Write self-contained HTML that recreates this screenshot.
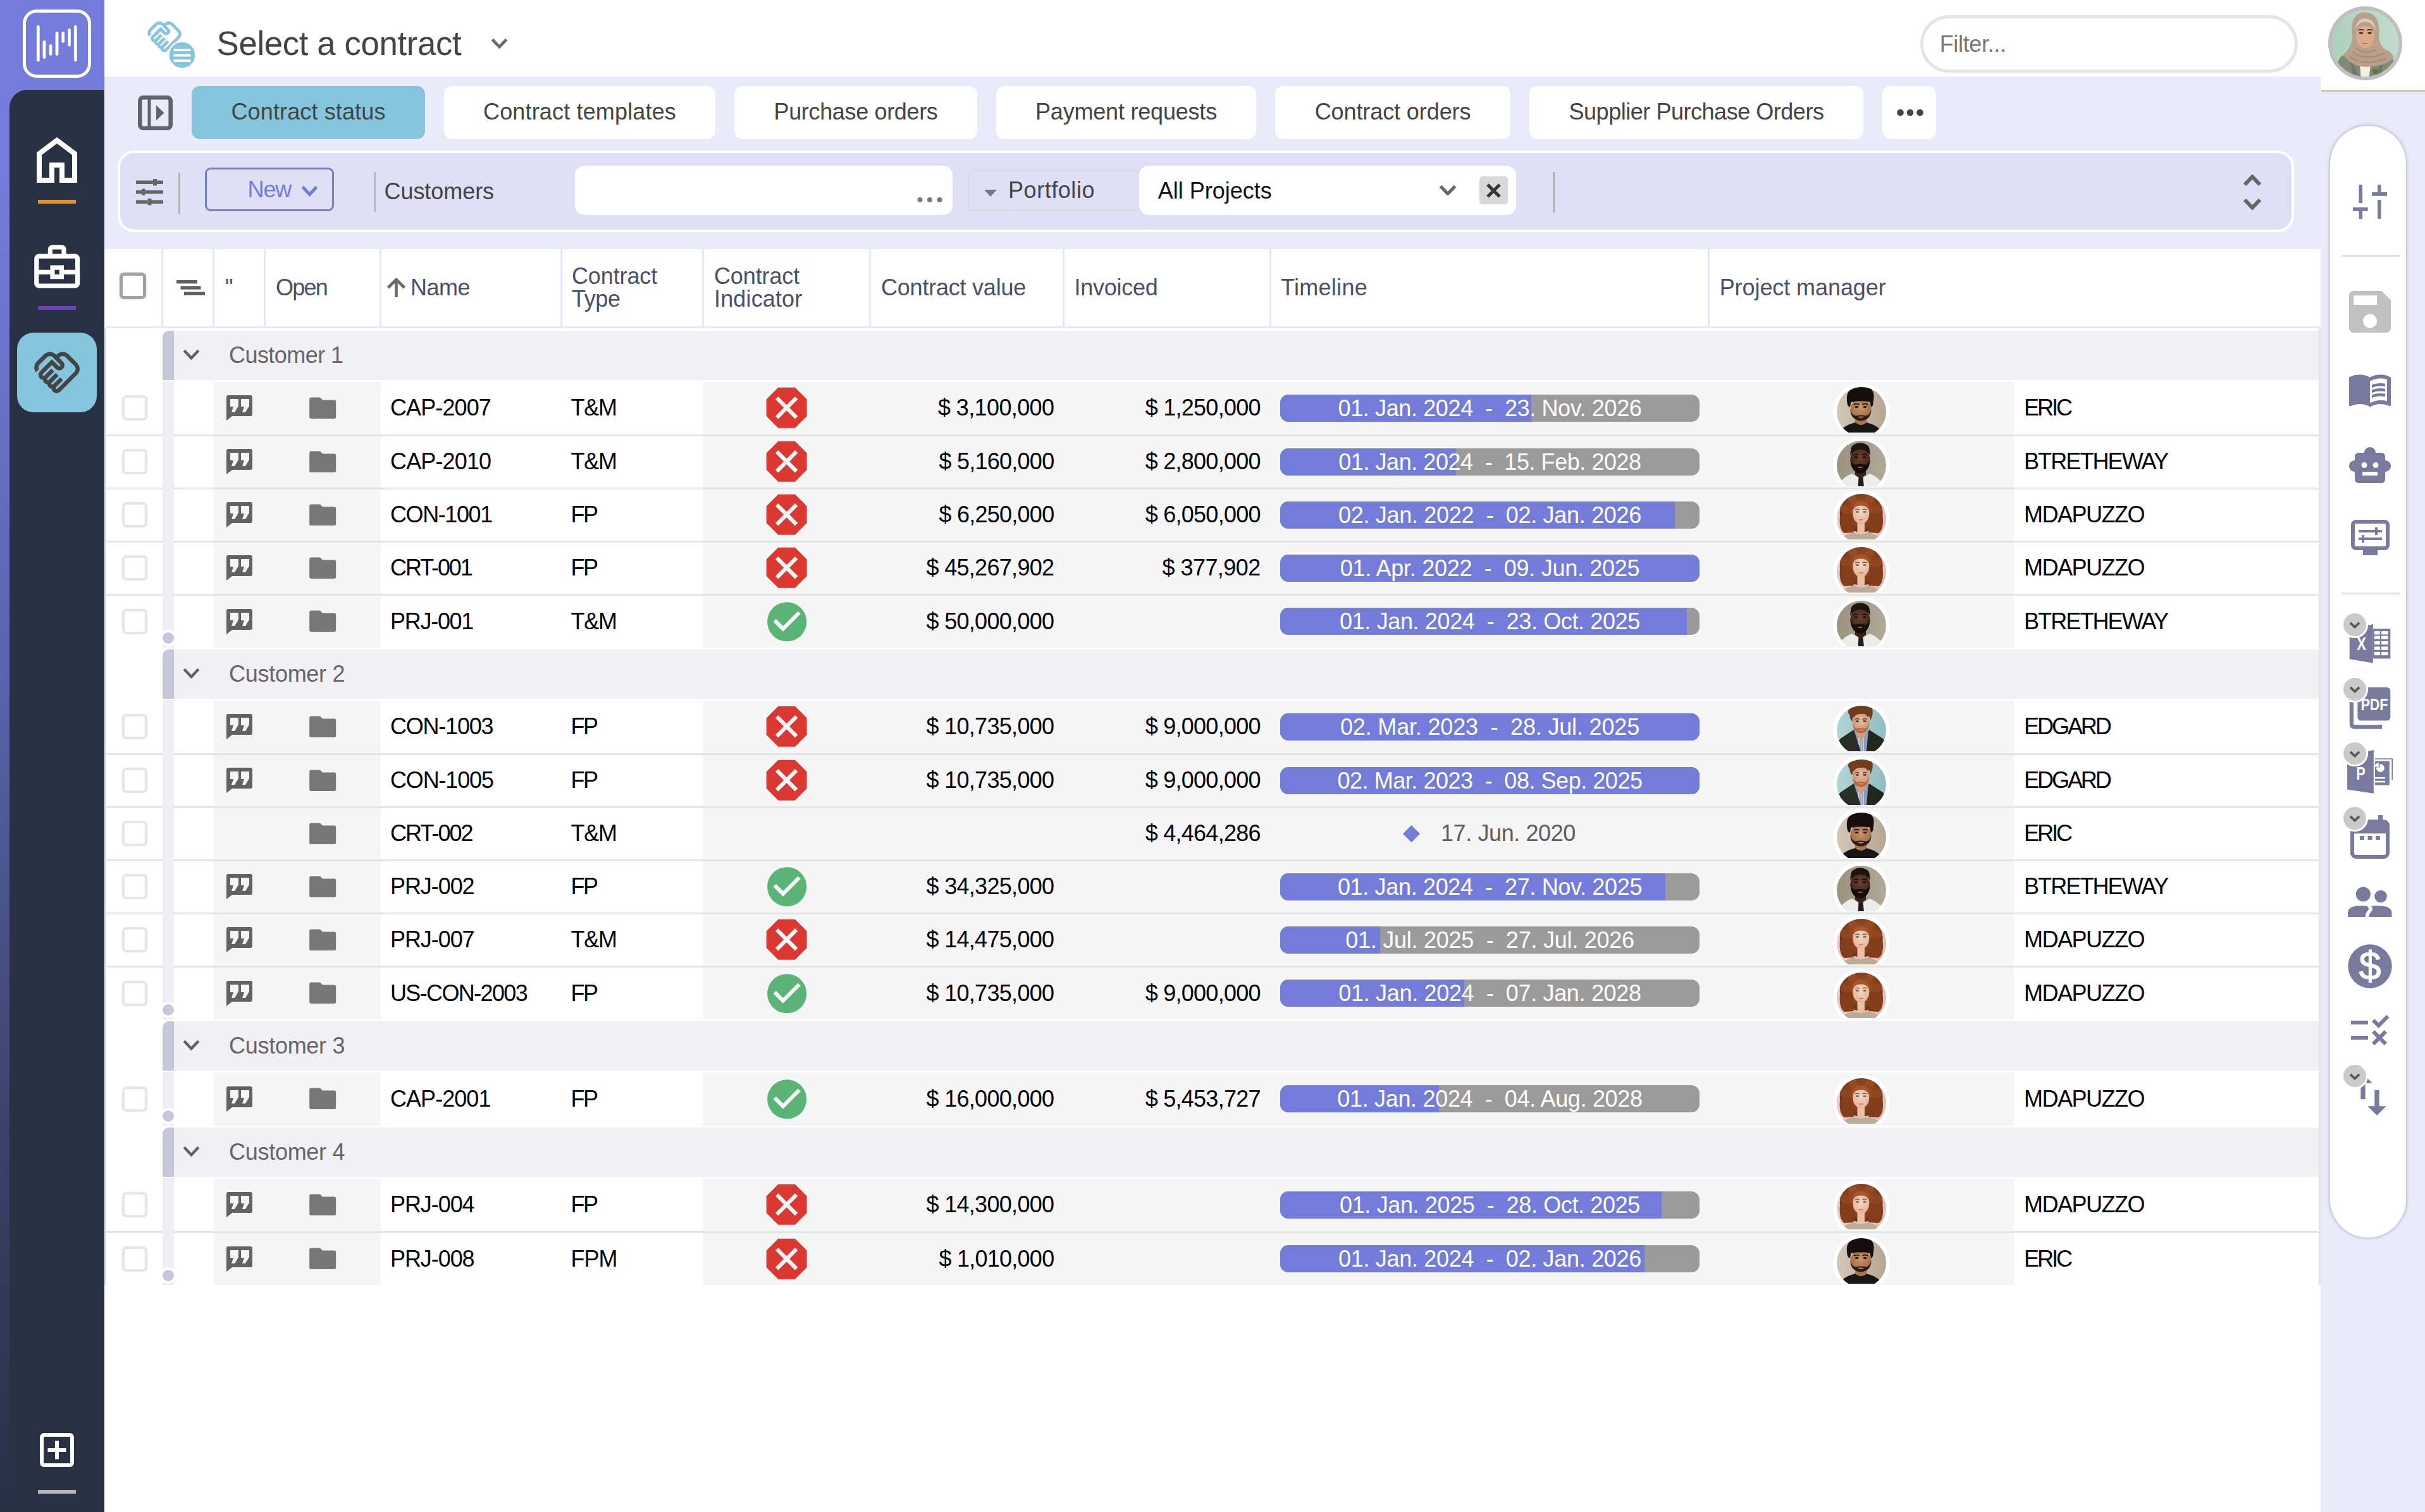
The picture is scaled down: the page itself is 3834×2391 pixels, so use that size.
<!DOCTYPE html><html><head><meta charset="utf-8"><title>Select a contract</title><style>
*{box-sizing:border-box;margin:0;padding:0}
html,body{width:3834px;height:2391px;overflow:hidden;background:#fff}
body{font-family:"Liberation Sans",sans-serif;font-size:36px;color:#444;position:relative}
.a{position:absolute}
.t{position:absolute;white-space:pre;line-height:84px;height:84px}
#side{left:0;top:0;width:165px;height:2391px;background:linear-gradient(180deg,#737dd9 0%,#737dd9 12%,#5a63ad 45%,#3a4268 75%,#283046 100%)}
#dark{left:15px;top:142px;width:150px;height:2249px;background:#283044;border-top-left-radius:28px}
#logo{left:36px;top:15px;width:108px;height:108px;border:5px solid #fff;border-radius:22px}
#tile{left:27px;top:526px;width:126px;height:126px;background:#85c6de;border-radius:26px}
#lav{left:165px;top:121px;width:3504px;height:273px;background:#e9eafa}
#rail{left:3669px;top:145px;width:165px;height:2246px;background:#e9eafa}
#railline{left:3670px;top:142px;width:164px;height:3px;background:#cbc7bc}
#pill{left:3684px;top:199px;width:120px;height:1758px;border-radius:60px;background:#fff;box-shadow:0 0 5px 1px rgba(90,90,100,.38)}
.tab{position:absolute;top:136px;height:84px;border-radius:13px;background:#fff;text-align:center;line-height:82px;color:#444;white-space:pre}
#fbar{left:186px;top:238px;width:3441px;height:129px;border:4px solid #fff;border-radius:26px;background:#dfe0f6}
.vsep{position:absolute;width:3px;background:#b4b4ac}
.hl{position:absolute;background:#e6e7fa}
.ht{position:absolute;white-space:pre;color:#4a4f6a;line-height:36px}
.grp{position:absolute;left:257px;width:3409px;height:77.5px;background:#f0f0f5;border-top-left-radius:10px;overflow:hidden}
.grp i{position:absolute;left:0;top:0;width:18px;height:100%;background:#c6c8da}
.gt{position:absolute;left:362px;white-space:pre;color:#666;line-height:77px;height:77px}
.g1{position:absolute;left:338px;width:264px;height:83px;background:#f5f5f5}
.g2{position:absolute;left:1112px;width:2072px;height:83px;background:#f5f5f5;overflow:hidden}
.sep{position:absolute;height:3px;background:#e5e5e5}
.cb{position:absolute;left:193px;width:40px;height:40px;border:4px solid #e6e6e6;border-radius:7px;background:#fff;box-shadow:0 0 2px rgba(0,0,0,.08)}
.k{color:#000}
.bar{position:absolute;left:2024px;width:663px;height:43px;border-radius:13px;background:#9b9b9b;overflow:hidden}
.bar i{position:absolute;left:0;top:0;height:100%;background:#737dd9}
.bt{position:absolute;left:2024px;width:663px;text-align:center;color:#fff;white-space:pre;line-height:43px;height:43px}
.strip{position:absolute;left:257px;width:18px;background:#eeeef5}
.dot{position:absolute;left:253px;width:26px;height:26px;border-radius:50%;background:#fff}
.dot i{position:absolute;left:4px;top:4px;width:18px;height:18px;border-radius:50%;background:#c6c8da}
.av{position:absolute;left:2898px;width:90px;height:90px}
.badge{position:absolute;width:35.600px;height:35.600px;border-radius:50%;background:#cacaca;box-shadow:0 0 0 3px #fff}
</style></head><body><svg width="0" height="0" style="position:absolute"><defs>
<clipPath id="cp"><circle cx="45" cy="45" r="39"/></clipPath>
<filter id="bl" x="-10%" y="-10%" width="120%" height="120%"><feGaussianBlur stdDeviation="0.75"/></filter>
<linearGradient id="bgE" x1="0" x2="1"><stop offset="0" stop-color="#d6cabb"/><stop offset="1" stop-color="#b3a391"/></linearGradient>
<linearGradient id="bgB" x1="0" x2="1"><stop offset="0" stop-color="#9a917f"/><stop offset="1" stop-color="#b3ab99"/></linearGradient>
<linearGradient id="bgM" x1="0" x2="1"><stop offset="0" stop-color="#e9cbc6"/><stop offset="1" stop-color="#e2bdb8"/></linearGradient>
<linearGradient id="bgG" x1="0" x2="1"><stop offset="0" stop-color="#b4d6d8"/><stop offset="1" stop-color="#8fbcc1"/></linearGradient>
<radialGradient id="skE" cx=".5" cy=".4" r=".6"><stop offset="0" stop-color="#c99468"/><stop offset="1" stop-color="#9a6843"/></radialGradient>
<radialGradient id="skB" cx=".5" cy=".4" r=".6"><stop offset="0" stop-color="#6b4230"/><stop offset="1" stop-color="#3c2318"/></radialGradient>
<radialGradient id="skM" cx=".5" cy=".45" r=".6"><stop offset="0" stop-color="#f6d6be"/><stop offset="1" stop-color="#e3b397"/></radialGradient>
<radialGradient id="skG" cx=".5" cy=".4" r=".6"><stop offset="0" stop-color="#e9bd9d"/><stop offset="1" stop-color="#c48f6e"/></radialGradient>
<radialGradient id="hrM" cx=".5" cy=".45" r=".55"><stop offset="0" stop-color="#a55628"/><stop offset=".7" stop-color="#88401c"/><stop offset="1" stop-color="#6f3016"/></radialGradient>
</defs></svg><div id="side" class="a"></div><div id="dark" class="a"></div><div id="logo" class="a"></div><svg class="a" style="left:36px;top:15px" width="108" height="108" viewBox="36 15 108 108" ><line x1="60.3" y1="42.4" x2="60.3" y2="95.0" stroke="#fff" stroke-width="4.800" stroke-linecap="round"/><line x1="70" y1="66.4" x2="70" y2="90.6" stroke="#fff" stroke-width="4.800" stroke-linecap="round"/><line x1="80" y1="72.4" x2="80" y2="85.6" stroke="#fff" stroke-width="4.800" stroke-linecap="round"/><line x1="90" y1="52.4" x2="90" y2="85.6" stroke="#fff" stroke-width="4.800" stroke-linecap="round"/><line x1="99.7" y1="52.4" x2="99.7" y2="65.6" stroke="#fff" stroke-width="4.800" stroke-linecap="round"/><line x1="109.5" y1="47.4" x2="109.5" y2="71.1" stroke="#fff" stroke-width="4.800" stroke-linecap="round"/><line x1="119.3" y1="42.4" x2="119.3" y2="95.0" stroke="#fff" stroke-width="4.800" stroke-linecap="round"/></svg><svg class="a" style="left:42px;top:205px" width="96" height="96" viewBox="0 0 24 24" ><path fill="#fff" d="M6 19h3v-6h6v6h3v-9l-6-4.5L6 10v9Zm-2 2V9l8-6 8 6v12h-7v-6h-2v6H4Z"/></svg><div class="a" style="left:60px;top:316px;width:60px;height:6px;background:#e8912d"></div><svg class="a" style="left:46.8px;top:379.8px" width="86.4" height="86.4" viewBox="0 0 24 24" ><path fill="#fff" d="M4 21q-.825 0-1.413-.588T2 19V8q0-.825.588-1.413T4 6h4V4q0-.825.588-1.413T10 2h4q.825 0 1.413.588T16 4v2h4q.825 0 1.413.588T22 8v11q0 .825-.588 1.413T20 21H4Zm6-15h4V4h-4v2Zm10 9h-5v2H9v-2H4v4h16v-4Zm-9 0h2v-2h-2v2Zm-7-2h5v-2h6v2h5V8H4v5Z"/></svg><div class="a" style="left:60px;top:484px;width:60px;height:6px;background:#6a3fb8"></div><div id="tile" class="a"></div><svg class="a" style="left:50.9px;top:549.5px" width="78.2" height="78.2" viewBox="0 0 24 24" ><path fill="#444" d="M11.875 20q.1 0 .2-.05t.15-.1l8.2-8.2q.3-.3.438-.675T21 10.225q0-.4-.138-.763T20.425 8.825l-4.25-4.25q-.275-.3-.637-.437T14.775 4q-.375 0-.75.138t-.675.437l-.275.275 1.85 1.875q.375.35.55.8t.175.95q0 1.05-.712 1.763T13.175 10.95q-.5 0-.962-.175t-.813-.525L9.525 8.4 5.15 12.775q-.075.075-.112.163T5 13.125q0 .2.15.363t.35.162q.1 0 .2-.05t.15-.1l3.4-3.4 1.4 1.4-3.375 3.4q-.075.075-.112.163t-.038.187q0 .2.15.35t.35.15q.1 0 .2-.05t.15-.1l3.4-3.375 1.4 1.4-3.375 3.4q-.075.05-.112.15t-.038.2q0 .2.15.35t.35.15q.1 0 .187-.038t.163-.112l3.4-3.375 1.4 1.4-3.4 3.4q-.075.075-.112.163t-.038.187q0 .2.163.35t.362.15Zm-.025 2q-.925 0-1.638-.613T9.376 19.85q-.85-.125-1.425-.7t-.7-1.425q-.85-.125-1.412-.713T5.15 15.6q-.95-.125-1.55-.825T3 13.125q0-.5.188-.963t.537-.812l5.8-5.775L12.8 8.85q.05.075.15.113t.2.037q.225 0 .375-.138t.15-.362q0-.1-.037-.2t-.113-.15L9.950 4.575q-.275-.3-.638-.437T8.550 4q-.375 0-.75.138t-.675.437L3.600 8.125q-.225.225-.375.525t-.2.6q-.05.3 0 .613t.2.587l-1.450 1.450q-.425-.575-.625-1.263T1 9.250q.050-.7.350-1.363T2.175 6.700L5.700 3.175q.600-.575 1.338-.875T8.550 2q.775 0 1.513.3t1.312.875l.275.275.275-.275q.600-.575 1.338-.875T14.775 2q.775 0 1.513.3t1.312.875L21.825 7.400q.575.575.875 1.325T23 10.250q0 .775-.3 1.513t-.875 1.312l-8.200 8.175q-.350.350-.812.550T11.850 22Z"/></svg><svg class="a" style="left:63px;top:2266px" width="54" height="54" viewBox="0 0 54 54" ><rect x="3" y="3" width="48" height="48" rx="4" fill="none" stroke="#fff" stroke-width="6"/><path d="M12.500 27H41.500M27 12.500V41.500" stroke="#fff" stroke-width="6"/></svg><div class="a" style="left:60px;top:2356px;width:60px;height:6px;background:#b5b5b5"></div><svg class="a" style="left:230.6px;top:29.2px" width="58.3" height="58.3" viewBox="0 0 24 24" ><path fill="#85c6de" d="M11.875 20q.1 0 .2-.05t.15-.1l8.2-8.2q.3-.3.438-.675T21 10.225q0-.4-.138-.763T20.425 8.825l-4.25-4.25q-.275-.3-.637-.437T14.775 4q-.375 0-.75.138t-.675.437l-.275.275 1.85 1.875q.375.35.55.8t.175.95q0 1.05-.712 1.763T13.175 10.95q-.5 0-.962-.175t-.813-.525L9.525 8.4 5.15 12.775q-.075.075-.112.163T5 13.125q0 .2.15.363t.35.162q.1 0 .2-.05t.15-.1l3.4-3.4 1.4 1.4-3.375 3.4q-.075.075-.112.163t-.038.187q0 .2.15.35t.35.15q.1 0 .2-.05t.15-.1l3.4-3.375 1.4 1.4-3.375 3.4q-.075.05-.112.15t-.038.2q0 .2.15.35t.35.15q.1 0 .187-.038t.163-.112l3.4-3.375 1.4 1.4-3.4 3.4q-.075.075-.112.163t-.038.187q0 .2.163.35t.362.15Zm-.025 2q-.925 0-1.638-.613T9.376 19.85q-.85-.125-1.425-.7t-.7-1.425q-.85-.125-1.412-.713T5.15 15.6q-.95-.125-1.55-.825T3 13.125q0-.5.188-.963t.537-.812l5.8-5.775L12.8 8.85q.05.075.15.113t.2.037q.225 0 .375-.138t.15-.362q0-.1-.037-.2t-.113-.15L9.950 4.575q-.275-.3-.638-.437T8.550 4q-.375 0-.75.138t-.675.437L3.600 8.125q-.225.225-.375.525t-.2.6q-.05.3 0 .613t.2.587l-1.450 1.450q-.425-.575-.625-1.263T1 9.250q.050-.7.350-1.363T2.175 6.700L5.700 3.175q.600-.575 1.338-.875T8.550 2q.775 0 1.513.3t1.312.875l.275.275.275-.275q.600-.575 1.338-.875T14.775 2q.775 0 1.513.3t1.312.875L21.825 7.400q.575.575.875 1.325T23 10.250q0 .775-.3 1.513t-.875 1.312l-8.200 8.175q-.350.350-.812.550T11.850 22Z"/></svg><svg class="a" style="left:265px;top:64px" width="46" height="46" viewBox="0 0 46 46" ><circle cx="23" cy="23" r="21.500" fill="#85c6de" stroke="#fff" stroke-width="2.500"/><path d="M9.500 15H36.500M9.500 23.500H36.500M9.500 32H36.500" stroke="#fff" stroke-width="4"/></svg><div class="t" style="left:342.600px;top:26.500px;font-size:52.800px;color:#444;letter-spacing:-0.39px;">Select a contract</div><svg class="a" style="left:776px;top:60px" width="27" height="17" viewBox="0 0 27 17" ><path d="M2.3 2.3 L13.5 14.2 L24.7 2.3" fill="none" stroke="#6a6a6a" stroke-width="4.6" stroke-linejoin="miter"/></svg><div class="a" style="left:3036px;top:24px;width:597px;height:91px;border:5px solid #e5e5e5;border-radius:46px"></div><div class="t" style="left:3066.700px;top:28px;color:#777;letter-spacing:-0.34px;">Filter...</div><svg class="a" style="left:3681px;top:10px" width="117" height="117" viewBox="0 0 117 117"><defs><clipPath id="cu"><circle cx="58.500" cy="58.500" r="52.800"/></clipPath><linearGradient id="bgU" x1="0" x2="1"><stop offset="0" stop-color="#acd0bb"/><stop offset="1" stop-color="#c4dccc"/></linearGradient></defs><circle cx="58.500" cy="58.500" r="58.500" fill="#bfbfbf"/><g clip-path="url(#cu)"><rect width="117" height="117" fill="url(#bgU)"/><g filter="url(#bl)"><path d="M12 117Q12 84 22 78L40 74L58 96L88 76L100 80Q108 88 108 117Z" fill="#7f8a79"/><path d="M34 80L52 117H40Z" fill="#6d7868"/><path d="M86 82L72 117H84Z" fill="#6d7868"/><path d="M50 92h17l-3 25h-12Z" fill="#f4efe0"/><path d="M38 50Q33 10 58 9.500Q84 10 80 50Q82 62 90 68Q100 72 104 80Q96 92 70 95Q52 98 38 90Q28 84 24 76Q36 66 38 50Z" fill="#b8a08d"/><path d="M43 36Q46 19 58.500 19.500Q73 20 75 38Q70 26 58.500 26Q48 26 43 36Z" fill="#dccfc2"/><ellipse cx="58.500" cy="46" rx="14.500" ry="20" fill="#dcab8a"/><path d="M44 44Q44 24 58.500 24.500Q73 24 73 44Q70 31 58.500 31Q47 31 44 44Z" fill="#b8a08d"/><path d="M52.500 58.500Q58.500 62 64.500 58.500Q58.500 57 52.500 58.500Z" fill="#c7706a"/><ellipse cx="52" cy="42" rx="3.200" ry="1.600" fill="#3a2820"/><ellipse cx="65.500" cy="42" rx="3.200" ry="1.600" fill="#3a2820"/><path d="M47.500 38q4.500-2.400 9 0M61 38q4.500-2.400 9 0" stroke="#3a2820" stroke-width="1.500" fill="none"/><path d="M38 72Q58 88 88 74M34 80Q58 96 92 82M44 66Q58 78 76 68" stroke="#a48b78" stroke-width="2" fill="none"/><circle cx="74.500" cy="103" r="4.200" fill="#5c7a3e"/></g></g></svg><div id="lav" class="a"></div><div id="rail" class="a"></div><div id="railline" class="a"></div><div id="pill" class="a"></div><svg class="a" style="left:218px;top:150.5px" width="55" height="55" viewBox="0 0 55 55" ><rect x="3.300" y="3.300" width="48.400" height="48.400" rx="5" fill="none" stroke="#60636b" stroke-width="6.600"/><rect x="15.500" y="3" width="5" height="49" fill="#60636b"/><path d="M29 15.500V39.500L41.500 27.500Z" fill="#60636b"/></svg><div class="tab" style="left:303px;width:369px;background:#85c6de;letter-spacing:0.13px;">Contract status</div><div class="tab" style="left:702px;width:429px;letter-spacing:0.16px;">Contract templates</div><div class="tab" style="left:1161px;width:384px;letter-spacing:-0.34px;">Purchase orders</div><div class="tab" style="left:1575px;width:411px;letter-spacing:-0.2px;">Payment requests</div><div class="tab" style="left:2016px;width:372px;letter-spacing:-0.09px;">Contract orders</div><div class="tab" style="left:2418px;width:528px;letter-spacing:-0.47px;">Supplier Purchase Orders</div><div class="tab" style="left:2976px;width:85px"></div><svg class="a" style="left:2990px;top:165px" width="60" height="26" viewBox="0 0 60 26" ><circle cx="14.500" cy="13" r="5.300" fill="#444"/><circle cx="30" cy="13" r="5.300" fill="#444"/><circle cx="45.500" cy="13" r="5.300" fill="#444"/></svg><div id="fbar" class="a"></div><svg class="a" style="left:215px;top:283px" width="43" height="42" viewBox="0 0 43 42" ><g fill="#666"><rect x="0" y="2.500" width="27" height="5.500"/><rect x="33" y="2.500" width="10" height="5.500"/><rect x="27" y="0" width="6" height="10.500"/><rect x="0" y="18" width="9" height="5.500"/><rect x="14.500" y="18" width="28.500" height="5.500"/><rect x="9" y="15.500" width="5.500" height="10.500"/><rect x="0" y="33.500" width="18.500" height="5.500"/><rect x="24" y="33.500" width="19" height="5.500"/><rect x="18.500" y="31" width="6" height="10.500"/></g></svg><div class="vsep" style="left:282px;top:272.500px;height:65.500px"></div><div class="a" style="left:324px;top:265px;width:204px;height:68.500px;border:3.500px solid #737dd9;border-radius:9px"></div><div class="t" style="left:391.600px;top:257.500px;color:#737dd9;letter-spacing:-1.21px;">New</div><svg class="a" style="left:476px;top:293px" width="27" height="17.5" viewBox="0 0 27 17.5" ><path d="M2.5 2.5 L13.5 14.5 L24.5 2.5" fill="none" stroke="#737dd9" stroke-width="5" stroke-linejoin="miter"/></svg><div class="vsep" style="left:591px;top:272px;height:63px;background:#bcbcb6"></div><div class="t" style="left:607.500px;top:261px;letter-spacing:-0.06px;">Customers</div><div class="a" style="left:909px;top:262px;width:597px;height:78px;border-radius:15px;background:#fff"></div><svg class="a" style="left:1448px;top:309px" width="46" height="14" viewBox="0 0 46 14" ><circle cx="6.500" cy="7" r="4" fill="#7a7a7a"/><circle cx="22" cy="7" r="4" fill="#7a7a7a"/><circle cx="37.500" cy="7" r="4" fill="#7a7a7a"/></svg><div class="a" style="left:1530.500px;top:270px;width:272px;height:63px;border:1.500px solid #d8d8d2"></div><svg class="a" style="left:1556px;top:300px" width="20" height="11" viewBox="0 0 20 11" ><path d="M0 0H20L10 11Z" fill="#777"/></svg><div class="t" style="left:1594px;top:258.500px;letter-spacing:0.55px;">Portfolio</div><div class="a" style="left:1800.500px;top:262px;width:596.500px;height:77.600px;border-radius:15px;background:#fff"></div><div class="t k" style="left:1830.700px;top:259.800px;color:#111;letter-spacing:-0.01px;">All Projects</div><svg class="a" style="left:2275px;top:291.5px" width="28" height="17.5" viewBox="0 0 28 17.5" ><path d="M2.5 2.5 L14.0 14.5 L25.5 2.5" fill="none" stroke="#666" stroke-width="5" stroke-linejoin="miter"/></svg><div class="a" style="left:2339px;top:278.500px;width:45px;height:44.500px;border-radius:5px;background:#d8d8d8"></div><svg class="a" style="left:2350px;top:289.5px" width="23" height="23" viewBox="0 0 23 23" ><path d="M2 2L21 21M21 2L2 21" stroke="#333" stroke-width="5"/></svg><div class="vsep" style="left:2455px;top:272px;height:63.600px"></div><svg class="a" style="left:3546px;top:276px" width="30" height="19" viewBox="0 0 30 19" ><path d="M3.0 16.0 L15.0 3.5 L27.0 16.0" fill="none" stroke="#666" stroke-width="6" stroke-linejoin="miter"/></svg><svg class="a" style="left:3546px;top:312.5px" width="30" height="19" viewBox="0 0 30 19" ><path d="M3.0 3.0 L15.0 15.5 L27.0 3.0" fill="none" stroke="#666" stroke-width="6" stroke-linejoin="miter"/></svg><div class="a" style="left:165px;top:394px;width:3504px;height:122px;background:#fff"></div><div class="hl" style="left:255px;top:394px;width:3px;height:122px"></div><div class="hl" style="left:336px;top:394px;width:3px;height:122px"></div><div class="hl" style="left:417px;top:394px;width:3px;height:122px"></div><div class="hl" style="left:600px;top:394px;width:3px;height:122px"></div><div class="hl" style="left:885.5px;top:394px;width:3px;height:122px"></div><div class="hl" style="left:1109.5px;top:394px;width:3px;height:122px"></div><div class="hl" style="left:1373.5px;top:394px;width:3px;height:122px"></div><div class="hl" style="left:1679.5px;top:394px;width:3px;height:122px"></div><div class="hl" style="left:2006.5px;top:394px;width:3px;height:122px"></div><div class="hl" style="left:2699.5px;top:394px;width:3px;height:122px"></div><div class="hl" style="left:168px;top:516px;width:3501px;height:3px"></div><div class="a" style="left:189px;top:431px;width:41.500px;height:41.500px;border:5px solid #a2a2a2;border-radius:7px;box-shadow:0 0 2px rgba(0,0,0,.25)"></div><svg class="a" style="left:279px;top:443px" width="45" height="24" viewBox="0 0 45 24" ><g fill="#606060"><rect x="0" y="0" width="33" height="5.400"/><rect x="6.500" y="9.300" width="32" height="5.400"/><rect x="12" y="18.600" width="33" height="5.400"/></g></svg><div class="ht" style="left:355.7px;top:437px;letter-spacing:-1.47px;">&quot;</div><div class="ht" style="left:436px;top:437px;letter-spacing:-1.77px;">Open</div><svg class="a" style="left:611px;top:440px" width="31" height="31" viewBox="0 0 31 31" ><path d="M15.500 30V3M2.500 15L15.500 2L28.500 15" fill="none" stroke="#6a6a6a" stroke-width="4.600"/></svg><div class="ht" style="left:649px;top:437px;letter-spacing:-0.51px;">Name</div><div class="ht" style="left:904px;top:419px;letter-spacing:-0.13px;">Contract</div><div class="ht" style="left:904px;top:455px;letter-spacing:-0.36px;">Type</div><div class="ht" style="left:1129px;top:419px;letter-spacing:-0.13px;">Contract</div><div class="ht" style="left:1129px;top:455px;letter-spacing:0.15px;">Indicator</div><div class="ht" style="left:1393px;top:437px;letter-spacing:-0.22px;">Contract value</div><div class="ht" style="left:1698.6px;top:437px;letter-spacing:-0.26px;">Invoiced</div><div class="ht" style="left:2025px;top:437px;letter-spacing:0.29px;">Timeline</div><div class="ht" style="left:2718.7px;top:437px;letter-spacing:-0.08px;">Project manager</div><div class="a" style="left:165px;top:519px;width:3px;height:1512.5px;background:#e6e6e6"></div><div class="a" style="left:3666px;top:519px;width:3px;height:1512.5px;background:#e6e6e6"></div><div class="grp" style="top:523.0px"><i></i></div><svg class="a" style="left:289px;top:551.5px" width="27" height="17" viewBox="0 0 27 17" ><path d="M2.2 2.2 L13.5 14.3 L24.8 2.2" fill="none" stroke="#626262" stroke-width="4.4" stroke-linejoin="miter"/></svg><div class="gt" style="top:523.0px;letter-spacing:-0.55px;">Customer 1</div><div class="strip" style="top:603.0px;height:420.5px"></div><div class="dot" style="top:996.0px"><i></i></div><div class="cb" style="top:625.2px"></div><div class="g1" style="top:604.0px"></div><div class="g2" style="top:604.0px"><div class="a" style="left:0;top:2.2px;width:2072px;height:78px;overflow:hidden"><svg class="a" style="left:1786px;top:0" width="90" height="90" viewBox="0 0 90 90"><circle cx="45" cy="45" r="45" fill="#fff"/><g clip-path="url(#cp)"><rect x="0" y="0" width="90" height="90" fill="url(#bgE)"/><g filter="url(#bl)"><path d="M6 90Q10 69 29 64L37 61.500Q44 69 51 61.500L59 64Q78 69 82 90Z" fill="#151515"/><path d="M35 50h18.500v12q-9 8-18.500 0Z" fill="#a9754e"/><path d="M22.500 30Q19 12 34 7.500Q50 2.500 60 9Q67 15 63.500 30Q60 22 44 22Q28 22 22.500 30Z" fill="#15100e"/><ellipse cx="43" cy="20" rx="19" ry="12" fill="#15100e"/><path d="M22.500 24Q21 36 27 38L29 26ZM63.500 24Q65 36 60 38L58 26Z" fill="#15100e"/><ellipse cx="44" cy="42" rx="16.500" ry="16.500" fill="url(#skE)"/><path d="M27.500 42Q28 58 44 59.500Q60 58 60.500 42Q58 51.500 51.500 51.500Q44 49.500 36.500 51.500Q30 51.500 27.500 42Z" fill="#2a1a12"/><path d="M38.500 53Q44 56.500 49.500 53Q44 52 38.500 53Z" fill="#cf8a80"/><path d="M27 31Q33 22 44 24.500Q56 22 61 31Q56 27.500 44 28.500Q32 27.500 27 31Z" fill="#15100e"/><ellipse cx="37.500" cy="37.500" rx="3" ry="1.400" fill="#24150e"/><ellipse cx="50.500" cy="37.500" rx="3" ry="1.400" fill="#24150e"/><path d="M33 33.800q4.500-2.200 8.500 0M46.500 33.800q4-2.200 8.500 0" stroke="#1b120d" stroke-width="1.800" fill="none"/></g></g></svg></div></div><svg class="a" style="left:358px;top:625.2px" width="41" height="40" viewBox="0 0 41 40" ><path fill="#626262" fill-rule="evenodd" d="M3 0H38Q41 0 41 3V30Q41 33 38 33H9L0 40V3Q0 0 3 0ZM6 6V18H11L8 27H13L19 17V6Z M23 6V18H28L25 27H30L36 17V6Z"/></svg><svg class="a" style="left:484.8px;top:619.5px" width="50.4" height="50.4" viewBox="0 0 24 24" ><path fill="#777" d="M10 4H3.300Q2 4 2 5.300V18.700Q2 20 3.300 20H20.700Q22 20 22 18.700V7.300Q22 6 20.700 6H12L10 4Z"/></svg><div class="t k" style="left:617px;top:603.2px;letter-spacing:-0.89px;">CAP-2007</div><div class="t k" style="left:902.600px;top:603.2px;letter-spacing:-1.33px;">T&amp;M</div><svg class="a" style="left:1201.3px;top:602.2px" width="85.34" height="85.34" viewBox="0 0 24 24" ><path fill="#dc3832" d="M15.73 3H8.27L3 8.27v7.46L8.27 21h7.46L21 15.73V8.27L15.73 3zM17 15.74L15.74 17 12 13.26 8.26 17 7 15.74 10.74 12 7 8.26 8.26 7 12 10.74 15.74 7 17 8.26 13.26 12 17 15.74z"/></svg><div class="t k" style="right:2167.6px;top:603.2px;letter-spacing:-0.62px;">$ 3,100,000</div><div class="t k" style="right:1841.3px;top:603.2px;letter-spacing:-0.75px;">$ 1,250,000</div><div class="bar" style="top:624.0px"><i style="width:59.90%"></i></div><div class="bt" style="top:624.0px;letter-spacing:-0.38px;">01. Jan. 2024  -  23. Nov. 2026</div><div class="t k" style="left:3200px;top:603.2px;letter-spacing:-3.0px;">ERIC</div><div class="cb" style="top:710.3px"></div><div class="g1" style="top:688.0px"></div><div class="g2" style="top:688.0px"><div class="a" style="left:0;top:3.3px;width:2072px;height:78px;overflow:hidden"><svg class="a" style="left:1786px;top:0" width="90" height="90" viewBox="0 0 90 90"><circle cx="45" cy="45" r="45" fill="#fff"/><g clip-path="url(#cp)"><rect x="0" y="0" width="90" height="90" fill="url(#bgB)"/><g filter="url(#bl)"><path d="M4 90Q8 66 30 58L44 66L58 58Q80 66 84 90Z" fill="#ecece8"/><path d="M40.500 63.500h7l2.500 26.500h-11Z" fill="#1c1c22"/><path d="M35 46h17v14l-8.500 6l-8.500-6Z" fill="#3a2217"/><ellipse cx="43" cy="20" rx="14.800" ry="10.500" fill="#1a120f"/><ellipse cx="43" cy="36" rx="15.500" ry="19" fill="url(#skB)"/><path d="M27.500 33Q27 55 43 58Q59 55 58.500 33Q57 43.500 51 44Q43 41.500 35 44Q29 43.500 27.500 33Z" fill="#120c09"/><path d="M38 47.500Q43 50.500 48 47.500Q43 46 38 47.500Z" fill="#9a6052"/><path d="M27.500 30Q25.500 14 43 13Q60.500 14 58.500 30Q56 20.500 43 20Q30 20.500 27.500 30Z" fill="#1a120f"/><ellipse cx="36.500" cy="32" rx="2.900" ry="1.300" fill="#0f0806"/><ellipse cx="49.500" cy="32" rx="2.900" ry="1.300" fill="#0f0806"/><path d="M32.500 28.500q4-2 8 0M45.500 28.500q4-2 8 0" stroke="#0f0806" stroke-width="1.700" fill="none"/></g></g></svg></div></div><svg class="a" style="left:358px;top:710.3px" width="41" height="40" viewBox="0 0 41 40" ><path fill="#626262" fill-rule="evenodd" d="M3 0H38Q41 0 41 3V30Q41 33 38 33H9L0 40V3Q0 0 3 0ZM6 6V18H11L8 27H13L19 17V6Z M23 6V18H28L25 27H30L36 17V6Z"/></svg><svg class="a" style="left:484.8px;top:704.6px" width="50.4" height="50.4" viewBox="0 0 24 24" ><path fill="#777" d="M10 4H3.300Q2 4 2 5.300V18.700Q2 20 3.300 20H20.700Q22 20 22 18.700V7.300Q22 6 20.700 6H12L10 4Z"/></svg><div class="t k" style="left:617px;top:688.3px;letter-spacing:-0.85px;">CAP-2010</div><div class="t k" style="left:902.600px;top:688.3px;letter-spacing:-1.33px;">T&amp;M</div><svg class="a" style="left:1201.3px;top:687.3px" width="85.34" height="85.34" viewBox="0 0 24 24" ><path fill="#dc3832" d="M15.73 3H8.27L3 8.27v7.46L8.27 21h7.46L21 15.73V8.27L15.73 3zM17 15.74L15.74 17 12 13.26 8.26 17 7 15.74 10.74 12 7 8.26 8.26 7 12 10.74 15.74 7 17 8.26 13.26 12 17 15.74z"/></svg><div class="t k" style="right:2167.6px;top:688.3px;letter-spacing:-0.75px;">$ 5,160,000</div><div class="t k" style="right:1841.3px;top:688.3px;letter-spacing:-0.75px;">$ 2,800,000</div><div class="bar" style="top:708.9px"><i style="width:41.90%"></i></div><div class="bt" style="top:708.9px;letter-spacing:-0.45px;">01. Jan. 2024  -  15. Feb. 2028</div><div class="t k" style="left:3200px;top:688.3px;letter-spacing:-1.9px;">BTRETHEWAY</div><div class="cb" style="top:794.3px"></div><div class="g1" style="top:772.0px"></div><div class="g2" style="top:772.0px"><div class="a" style="left:0;top:3.3px;width:2072px;height:78px;overflow:hidden"><svg class="a" style="left:1786px;top:0" width="90" height="90" viewBox="0 0 90 90"><circle cx="45" cy="45" r="45" fill="#fff"/><g clip-path="url(#cp)"><rect x="0" y="0" width="90" height="90" fill="url(#bgM)"/><g filter="url(#bl)"><ellipse cx="44.700" cy="36" rx="34" ry="30.500" fill="url(#hrM)"/><path d="M11 40Q9 62 18 68L33 67Q30 50 32 36ZM78.500 40Q81 62 72 68L56 67Q59 50 57 36Z" fill="#823c1a"/><circle cx="18" cy="30" r="7" fill="#8f4520"/><circle cx="71" cy="30" r="7" fill="#8f4520"/><circle cx="31" cy="14" r="7" fill="#964b23"/><circle cx="58" cy="14" r="7" fill="#964b23"/><path d="M6 90Q10 72 32 67.500L44 70L56 67.500Q78 72 84 90Z" fill="#b9ad9a"/><path d="M38.500 50h11.500v17q-5.700 4.500-11.500 0Z" fill="#eac1a6"/><ellipse cx="44.300" cy="36.500" rx="13" ry="17" fill="url(#skM)"/><path d="M31 33Q31 17 44.300 17.500Q58 17 57.500 33Q54 24 44.300 24.500Q34 24 31 33Z" fill="#a5562a"/><path d="M39.500 46.500Q44.300 49.500 49 46.500Q44.300 45 39.500 46.500Z" fill="#d47f78"/><ellipse cx="38.600" cy="34.500" rx="2.700" ry="1.500" fill="#58748c"/><ellipse cx="50" cy="34.500" rx="2.700" ry="1.500" fill="#58748c"/><path d="M35 31q3.600-1.800 7.200 0M46.400 31q3.600-1.800 7.200 0" stroke="#8a4a28" stroke-width="1.300" fill="none"/></g></g></svg></div></div><svg class="a" style="left:358px;top:794.3px" width="41" height="40" viewBox="0 0 41 40" ><path fill="#626262" fill-rule="evenodd" d="M3 0H38Q41 0 41 3V30Q41 33 38 33H9L0 40V3Q0 0 3 0ZM6 6V18H11L8 27H13L19 17V6Z M23 6V18H28L25 27H30L36 17V6Z"/></svg><svg class="a" style="left:484.8px;top:788.6px" width="50.4" height="50.4" viewBox="0 0 24 24" ><path fill="#777" d="M10 4H3.300Q2 4 2 5.300V18.700Q2 20 3.300 20H20.700Q22 20 22 18.700V7.300Q22 6 20.700 6H12L10 4Z"/></svg><div class="t k" style="left:617px;top:772.3px;letter-spacing:-1.41px;">CON-1001</div><div class="t k" style="left:902.600px;top:772.3px;letter-spacing:-2.51px;">FP</div><svg class="a" style="left:1201.3px;top:771.3px" width="85.34" height="85.34" viewBox="0 0 24 24" ><path fill="#dc3832" d="M15.73 3H8.27L3 8.27v7.46L8.27 21h7.46L21 15.73V8.27L15.73 3zM17 15.74L15.74 17 12 13.26 8.26 17 7 15.74 10.74 12 7 8.26 8.26 7 12 10.74 15.74 7 17 8.26 13.26 12 17 15.74z"/></svg><div class="t k" style="right:2167.6px;top:772.3px;letter-spacing:-0.75px;">$ 6,250,000</div><div class="t k" style="right:1841.3px;top:772.3px;letter-spacing:-0.75px;">$ 6,050,000</div><div class="bar" style="top:792.9px"><i style="width:94.06%"></i></div><div class="bt" style="top:792.9px;letter-spacing:-0.3px;">02. Jan. 2022  -  02. Jan. 2026</div><div class="t k" style="left:3200px;top:772.3px;letter-spacing:-1.5px;">MDAPUZZO</div><div class="cb" style="top:878.3px"></div><div class="g1" style="top:856.0px"></div><div class="g2" style="top:856.0px"><div class="a" style="left:0;top:3.3px;width:2072px;height:78px;overflow:hidden"><svg class="a" style="left:1786px;top:0" width="90" height="90" viewBox="0 0 90 90"><circle cx="45" cy="45" r="45" fill="#fff"/><g clip-path="url(#cp)"><rect x="0" y="0" width="90" height="90" fill="url(#bgM)"/><g filter="url(#bl)"><ellipse cx="44.700" cy="36" rx="34" ry="30.500" fill="url(#hrM)"/><path d="M11 40Q9 62 18 68L33 67Q30 50 32 36ZM78.500 40Q81 62 72 68L56 67Q59 50 57 36Z" fill="#823c1a"/><circle cx="18" cy="30" r="7" fill="#8f4520"/><circle cx="71" cy="30" r="7" fill="#8f4520"/><circle cx="31" cy="14" r="7" fill="#964b23"/><circle cx="58" cy="14" r="7" fill="#964b23"/><path d="M6 90Q10 72 32 67.500L44 70L56 67.500Q78 72 84 90Z" fill="#b9ad9a"/><path d="M38.500 50h11.500v17q-5.700 4.500-11.500 0Z" fill="#eac1a6"/><ellipse cx="44.300" cy="36.500" rx="13" ry="17" fill="url(#skM)"/><path d="M31 33Q31 17 44.300 17.500Q58 17 57.500 33Q54 24 44.300 24.500Q34 24 31 33Z" fill="#a5562a"/><path d="M39.500 46.500Q44.300 49.500 49 46.500Q44.300 45 39.500 46.500Z" fill="#d47f78"/><ellipse cx="38.600" cy="34.500" rx="2.700" ry="1.500" fill="#58748c"/><ellipse cx="50" cy="34.500" rx="2.700" ry="1.500" fill="#58748c"/><path d="M35 31q3.600-1.800 7.200 0M46.400 31q3.600-1.800 7.200 0" stroke="#8a4a28" stroke-width="1.300" fill="none"/></g></g></svg></div></div><svg class="a" style="left:358px;top:878.3px" width="41" height="40" viewBox="0 0 41 40" ><path fill="#626262" fill-rule="evenodd" d="M3 0H38Q41 0 41 3V30Q41 33 38 33H9L0 40V3Q0 0 3 0ZM6 6V18H11L8 27H13L19 17V6Z M23 6V18H28L25 27H30L36 17V6Z"/></svg><svg class="a" style="left:484.8px;top:872.6px" width="50.4" height="50.4" viewBox="0 0 24 24" ><path fill="#777" d="M10 4H3.300Q2 4 2 5.300V18.700Q2 20 3.300 20H20.700Q22 20 22 18.700V7.300Q22 6 20.700 6H12L10 4Z"/></svg><div class="t k" style="left:617px;top:856.3px;letter-spacing:-2.1px;">CRT-001</div><div class="t k" style="left:902.600px;top:856.3px;letter-spacing:-2.51px;">FP</div><svg class="a" style="left:1201.3px;top:855.3px" width="85.34" height="85.34" viewBox="0 0 24 24" ><path fill="#dc3832" d="M15.73 3H8.27L3 8.27v7.46L8.27 21h7.46L21 15.73V8.27L15.73 3zM17 15.74L15.74 17 12 13.26 8.26 17 7 15.74 10.74 12 7 8.26 8.26 7 12 10.74 15.74 7 17 8.26 13.26 12 17 15.74z"/></svg><div class="t k" style="right:2167.6px;top:856.3px;letter-spacing:-0.69px;">$ 45,267,902</div><div class="t k" style="right:1841.3px;top:856.3px;letter-spacing:-0.56px;">$ 377,902</div><div class="bar" style="top:876.9px"><i style="width:100.00%"></i></div><div class="bt" style="top:876.9px;letter-spacing:-0.28px;">01. Apr. 2022  -  09. Jun. 2025</div><div class="t k" style="left:3200px;top:856.3px;letter-spacing:-1.5px;">MDAPUZZO</div><div class="cb" style="top:963.0px"></div><div class="g1" style="top:940.0px;height:83.700px"></div><div class="g2" style="top:940.0px;height:83.700px"><div class="a" style="left:0;top:4.0px;width:2072px;height:78px;overflow:hidden"><svg class="a" style="left:1786px;top:0" width="90" height="90" viewBox="0 0 90 90"><circle cx="45" cy="45" r="45" fill="#fff"/><g clip-path="url(#cp)"><rect x="0" y="0" width="90" height="90" fill="url(#bgB)"/><g filter="url(#bl)"><path d="M4 90Q8 66 30 58L44 66L58 58Q80 66 84 90Z" fill="#ecece8"/><path d="M40.500 63.500h7l2.500 26.500h-11Z" fill="#1c1c22"/><path d="M35 46h17v14l-8.500 6l-8.500-6Z" fill="#3a2217"/><ellipse cx="43" cy="20" rx="14.800" ry="10.500" fill="#1a120f"/><ellipse cx="43" cy="36" rx="15.500" ry="19" fill="url(#skB)"/><path d="M27.500 33Q27 55 43 58Q59 55 58.500 33Q57 43.500 51 44Q43 41.500 35 44Q29 43.500 27.500 33Z" fill="#120c09"/><path d="M38 47.500Q43 50.500 48 47.500Q43 46 38 47.500Z" fill="#9a6052"/><path d="M27.500 30Q25.500 14 43 13Q60.500 14 58.500 30Q56 20.500 43 20Q30 20.500 27.500 30Z" fill="#1a120f"/><ellipse cx="36.500" cy="32" rx="2.900" ry="1.300" fill="#0f0806"/><ellipse cx="49.500" cy="32" rx="2.900" ry="1.300" fill="#0f0806"/><path d="M32.500 28.500q4-2 8 0M45.500 28.500q4-2 8 0" stroke="#0f0806" stroke-width="1.700" fill="none"/></g></g></svg></div></div><svg class="a" style="left:358px;top:963.0px" width="41" height="40" viewBox="0 0 41 40" ><path fill="#626262" fill-rule="evenodd" d="M3 0H38Q41 0 41 3V30Q41 33 38 33H9L0 40V3Q0 0 3 0ZM6 6V18H11L8 27H13L19 17V6Z M23 6V18H28L25 27H30L36 17V6Z"/></svg><svg class="a" style="left:484.8px;top:957.3px" width="50.4" height="50.4" viewBox="0 0 24 24" ><path fill="#777" d="M10 4H3.300Q2 4 2 5.300V18.700Q2 20 3.300 20H20.700Q22 20 22 18.700V7.300Q22 6 20.700 6H12L10 4Z"/></svg><div class="t k" style="left:617px;top:941.0px;letter-spacing:-1.28px;">PRJ-001</div><div class="t k" style="left:902.600px;top:941.0px;letter-spacing:-1.33px;">T&amp;M</div><svg class="a" style="left:1206.8px;top:945.5px" width="74.4" height="74.4" viewBox="0 0 24 24" ><path fill="#5ab377" d="M12 2C6.48 2 2 6.48 2 12s4.48 10 10 10 10-4.48 10-10S17.52 2 12 2zm-2 15l-5-5 1.41-1.41L10 14.17l7.59-7.59L19 8l-9 9z"/></svg><div class="t k" style="right:2167.6px;top:941.0px;letter-spacing:-0.69px;">$ 50,000,000</div><div class="bar" style="top:960.9px"><i style="width:97.00%"></i></div><div class="bt" style="top:960.9px;letter-spacing:-0.37px;">01. Jan. 2024  -  23. Oct. 2025</div><div class="t k" style="left:3200px;top:941.0px;letter-spacing:-1.9px;">BTRETHEWAY</div><div class="grp" style="top:1027.0px"><i></i></div><svg class="a" style="left:289px;top:1055.5px" width="27" height="17" viewBox="0 0 27 17" ><path d="M2.2 2.2 L13.5 14.3 L24.8 2.2" fill="none" stroke="#626262" stroke-width="4.4" stroke-linejoin="miter"/></svg><div class="gt" style="top:1027.0px;letter-spacing:-0.28px;">Customer 2</div><div class="strip" style="top:1107.0px;height:504.5px"></div><div class="dot" style="top:1584.0px"><i></i></div><div class="cb" style="top:1129.2px"></div><div class="g1" style="top:1108.0px"></div><div class="g2" style="top:1108.0px"><div class="a" style="left:0;top:2.2px;width:2072px;height:78px;overflow:hidden"><svg class="a" style="left:1786px;top:0" width="90" height="90" viewBox="0 0 90 90"><circle cx="45" cy="45" r="45" fill="#fff"/><g clip-path="url(#cp)"><rect x="0" y="0" width="90" height="90" fill="url(#bgG)"/><g filter="url(#bl)"><path d="M4 90Q4 64 12 58L33 44L44.500 78L57 44L79 58Q86 64 86 90Z" fill="#22261f"/><path d="M34 44L44.500 54L56 44L52 90H38Z" fill="#8d9cbb"/><path d="M41 56v34M44.500 58v32M48 56v34" stroke="#e1e6ef" stroke-width="1.300"/><path d="M12 58L33 44L44.500 80L38 90H20Z" fill="#2a2e27"/><path d="M37 42h15v10l-7.500 9l-7.500-9Z" fill="#cf9c7c"/><ellipse cx="43" cy="15.500" rx="19" ry="10.500" fill="#713c1f"/><ellipse cx="44.300" cy="33" rx="13.300" ry="15.500" fill="url(#skG)"/><path d="M31 33Q31.500 48 44.300 49.500Q57 48 57.500 33Q55.500 41.500 50.500 42Q44.300 40 38 42Q33 41.500 31 33Z" fill="#b56b3f"/><path d="M39.800 44.200Q44.300 46.800 48.800 44.200Q44.300 43 39.800 44.200Z" fill="#dd8f8a"/><path d="M27.500 27Q23 12 38 7Q52 3 62 10Q64.500 18 59.500 29Q58 20.500 53 19Q42 18 34.500 21Q31 23 30.500 31Z" fill="#713c1f"/><ellipse cx="38.500" cy="30.500" rx="2.600" ry="1.200" fill="#3b2a22"/><ellipse cx="50" cy="30.500" rx="2.600" ry="1.200" fill="#3b2a22"/><path d="M35 27.500q3.500-1.800 7 0M46.500 27.500q3.500-1.800 7 0" stroke="#5a3018" stroke-width="1.300" fill="none"/></g></g></svg></div></div><svg class="a" style="left:358px;top:1129.2px" width="41" height="40" viewBox="0 0 41 40" ><path fill="#626262" fill-rule="evenodd" d="M3 0H38Q41 0 41 3V30Q41 33 38 33H9L0 40V3Q0 0 3 0ZM6 6V18H11L8 27H13L19 17V6Z M23 6V18H28L25 27H30L36 17V6Z"/></svg><svg class="a" style="left:484.8px;top:1123.5px" width="50.4" height="50.4" viewBox="0 0 24 24" ><path fill="#777" d="M10 4H3.300Q2 4 2 5.300V18.700Q2 20 3.300 20H20.700Q22 20 22 18.700V7.300Q22 6 20.700 6H12L10 4Z"/></svg><div class="t k" style="left:617px;top:1107.2px;letter-spacing:-1.22px;">CON-1003</div><div class="t k" style="left:902.600px;top:1107.2px;letter-spacing:-2.51px;">FP</div><svg class="a" style="left:1201.3px;top:1106.2px" width="85.34" height="85.34" viewBox="0 0 24 24" ><path fill="#dc3832" d="M15.73 3H8.27L3 8.27v7.46L8.27 21h7.46L21 15.73V8.27L15.73 3zM17 15.74L15.74 17 12 13.26 8.26 17 7 15.74 10.74 12 7 8.26 8.26 7 12 10.74 15.74 7 17 8.26 13.26 12 17 15.74z"/></svg><div class="t k" style="right:2167.6px;top:1107.2px;letter-spacing:-0.69px;">$ 10,735,000</div><div class="t k" style="right:1841.3px;top:1107.2px;letter-spacing:-0.75px;">$ 9,000,000</div><div class="bar" style="top:1128.0px"><i style="width:100.00%"></i></div><div class="bt" style="top:1128.0px;letter-spacing:-0.17px;">02. Mar. 2023  -  28. Jul. 2025</div><div class="t k" style="left:3200px;top:1107.2px;letter-spacing:-3.04px;">EDGARD</div><div class="cb" style="top:1214.3px"></div><div class="g1" style="top:1192.0px"></div><div class="g2" style="top:1192.0px"><div class="a" style="left:0;top:3.3px;width:2072px;height:78px;overflow:hidden"><svg class="a" style="left:1786px;top:0" width="90" height="90" viewBox="0 0 90 90"><circle cx="45" cy="45" r="45" fill="#fff"/><g clip-path="url(#cp)"><rect x="0" y="0" width="90" height="90" fill="url(#bgG)"/><g filter="url(#bl)"><path d="M4 90Q4 64 12 58L33 44L44.500 78L57 44L79 58Q86 64 86 90Z" fill="#22261f"/><path d="M34 44L44.500 54L56 44L52 90H38Z" fill="#8d9cbb"/><path d="M41 56v34M44.500 58v32M48 56v34" stroke="#e1e6ef" stroke-width="1.300"/><path d="M12 58L33 44L44.500 80L38 90H20Z" fill="#2a2e27"/><path d="M37 42h15v10l-7.500 9l-7.500-9Z" fill="#cf9c7c"/><ellipse cx="43" cy="15.500" rx="19" ry="10.500" fill="#713c1f"/><ellipse cx="44.300" cy="33" rx="13.300" ry="15.500" fill="url(#skG)"/><path d="M31 33Q31.500 48 44.300 49.500Q57 48 57.500 33Q55.500 41.500 50.500 42Q44.300 40 38 42Q33 41.500 31 33Z" fill="#b56b3f"/><path d="M39.800 44.200Q44.300 46.800 48.800 44.200Q44.300 43 39.800 44.200Z" fill="#dd8f8a"/><path d="M27.500 27Q23 12 38 7Q52 3 62 10Q64.500 18 59.500 29Q58 20.500 53 19Q42 18 34.500 21Q31 23 30.500 31Z" fill="#713c1f"/><ellipse cx="38.500" cy="30.500" rx="2.600" ry="1.200" fill="#3b2a22"/><ellipse cx="50" cy="30.500" rx="2.600" ry="1.200" fill="#3b2a22"/><path d="M35 27.500q3.500-1.800 7 0M46.500 27.500q3.500-1.800 7 0" stroke="#5a3018" stroke-width="1.300" fill="none"/></g></g></svg></div></div><svg class="a" style="left:358px;top:1214.3px" width="41" height="40" viewBox="0 0 41 40" ><path fill="#626262" fill-rule="evenodd" d="M3 0H38Q41 0 41 3V30Q41 33 38 33H9L0 40V3Q0 0 3 0ZM6 6V18H11L8 27H13L19 17V6Z M23 6V18H28L25 27H30L36 17V6Z"/></svg><svg class="a" style="left:484.8px;top:1208.6px" width="50.4" height="50.4" viewBox="0 0 24 24" ><path fill="#777" d="M10 4H3.300Q2 4 2 5.300V18.700Q2 20 3.300 20H20.700Q22 20 22 18.700V7.300Q22 6 20.700 6H12L10 4Z"/></svg><div class="t k" style="left:617px;top:1192.3px;letter-spacing:-1.16px;">CON-1005</div><div class="t k" style="left:902.600px;top:1192.3px;letter-spacing:-2.51px;">FP</div><svg class="a" style="left:1201.3px;top:1191.3px" width="85.34" height="85.34" viewBox="0 0 24 24" ><path fill="#dc3832" d="M15.73 3H8.27L3 8.27v7.46L8.27 21h7.46L21 15.73V8.27L15.73 3zM17 15.74L15.74 17 12 13.26 8.26 17 7 15.74 10.74 12 7 8.26 8.26 7 12 10.74 15.74 7 17 8.26 13.26 12 17 15.74z"/></svg><div class="t k" style="right:2167.6px;top:1192.3px;letter-spacing:-0.69px;">$ 10,735,000</div><div class="t k" style="right:1841.3px;top:1192.3px;letter-spacing:-0.75px;">$ 9,000,000</div><div class="bar" style="top:1212.8px"><i style="width:100.00%"></i></div><div class="bt" style="top:1212.8px;letter-spacing:-0.46px;">02. Mar. 2023  -  08. Sep. 2025</div><div class="t k" style="left:3200px;top:1192.3px;letter-spacing:-3.04px;">EDGARD</div><div class="cb" style="top:1298.3px"></div><div class="g1" style="top:1276.0px"></div><div class="g2" style="top:1276.0px"><div class="a" style="left:0;top:3.3px;width:2072px;height:78px;overflow:hidden"><svg class="a" style="left:1786px;top:0" width="90" height="90" viewBox="0 0 90 90"><circle cx="45" cy="45" r="45" fill="#fff"/><g clip-path="url(#cp)"><rect x="0" y="0" width="90" height="90" fill="url(#bgE)"/><g filter="url(#bl)"><path d="M6 90Q10 69 29 64L37 61.500Q44 69 51 61.500L59 64Q78 69 82 90Z" fill="#151515"/><path d="M35 50h18.500v12q-9 8-18.500 0Z" fill="#a9754e"/><path d="M22.500 30Q19 12 34 7.500Q50 2.500 60 9Q67 15 63.500 30Q60 22 44 22Q28 22 22.500 30Z" fill="#15100e"/><ellipse cx="43" cy="20" rx="19" ry="12" fill="#15100e"/><path d="M22.500 24Q21 36 27 38L29 26ZM63.500 24Q65 36 60 38L58 26Z" fill="#15100e"/><ellipse cx="44" cy="42" rx="16.500" ry="16.500" fill="url(#skE)"/><path d="M27.500 42Q28 58 44 59.500Q60 58 60.500 42Q58 51.500 51.500 51.500Q44 49.500 36.500 51.500Q30 51.500 27.500 42Z" fill="#2a1a12"/><path d="M38.500 53Q44 56.500 49.500 53Q44 52 38.500 53Z" fill="#cf8a80"/><path d="M27 31Q33 22 44 24.500Q56 22 61 31Q56 27.500 44 28.500Q32 27.500 27 31Z" fill="#15100e"/><ellipse cx="37.500" cy="37.500" rx="3" ry="1.400" fill="#24150e"/><ellipse cx="50.500" cy="37.500" rx="3" ry="1.400" fill="#24150e"/><path d="M33 33.800q4.500-2.200 8.500 0M46.500 33.800q4-2.200 8.500 0" stroke="#1b120d" stroke-width="1.800" fill="none"/></g></g></svg></div></div><svg class="a" style="left:484.8px;top:1292.6px" width="50.4" height="50.4" viewBox="0 0 24 24" ><path fill="#777" d="M10 4H3.300Q2 4 2 5.300V18.700Q2 20 3.300 20H20.700Q22 20 22 18.700V7.300Q22 6 20.700 6H12L10 4Z"/></svg><div class="t k" style="left:617px;top:1276.3px;letter-spacing:-1.97px;">CRT-002</div><div class="t k" style="left:902.600px;top:1276.3px;letter-spacing:-1.33px;">T&amp;M</div><div class="t k" style="right:1841.3px;top:1276.3px;letter-spacing:-0.75px;">$ 4,464,286</div><svg class="a" style="left:2218px;top:1304.8px" width="27" height="27" viewBox="0 0 27 27" ><path d="M13.500 0L27 13.500L13.500 27L0 13.500Z" fill="#737dd9"/></svg><div class="t" style="left:2278px;top:1276.3px;color:#5e5e5e;letter-spacing:-0.4px;">17. Jun. 2020</div><div class="t k" style="left:3200px;top:1276.3px;letter-spacing:-3.0px;">ERIC</div><div class="cb" style="top:1382.3px"></div><div class="g1" style="top:1360.0px"></div><div class="g2" style="top:1360.0px"><div class="a" style="left:0;top:3.3px;width:2072px;height:78px;overflow:hidden"><svg class="a" style="left:1786px;top:0" width="90" height="90" viewBox="0 0 90 90"><circle cx="45" cy="45" r="45" fill="#fff"/><g clip-path="url(#cp)"><rect x="0" y="0" width="90" height="90" fill="url(#bgB)"/><g filter="url(#bl)"><path d="M4 90Q8 66 30 58L44 66L58 58Q80 66 84 90Z" fill="#ecece8"/><path d="M40.500 63.500h7l2.500 26.500h-11Z" fill="#1c1c22"/><path d="M35 46h17v14l-8.500 6l-8.500-6Z" fill="#3a2217"/><ellipse cx="43" cy="20" rx="14.800" ry="10.500" fill="#1a120f"/><ellipse cx="43" cy="36" rx="15.500" ry="19" fill="url(#skB)"/><path d="M27.500 33Q27 55 43 58Q59 55 58.500 33Q57 43.500 51 44Q43 41.500 35 44Q29 43.500 27.500 33Z" fill="#120c09"/><path d="M38 47.500Q43 50.500 48 47.500Q43 46 38 47.500Z" fill="#9a6052"/><path d="M27.500 30Q25.500 14 43 13Q60.500 14 58.500 30Q56 20.500 43 20Q30 20.500 27.500 30Z" fill="#1a120f"/><ellipse cx="36.500" cy="32" rx="2.900" ry="1.300" fill="#0f0806"/><ellipse cx="49.500" cy="32" rx="2.900" ry="1.300" fill="#0f0806"/><path d="M32.500 28.500q4-2 8 0M45.500 28.500q4-2 8 0" stroke="#0f0806" stroke-width="1.700" fill="none"/></g></g></svg></div></div><svg class="a" style="left:358px;top:1382.3px" width="41" height="40" viewBox="0 0 41 40" ><path fill="#626262" fill-rule="evenodd" d="M3 0H38Q41 0 41 3V30Q41 33 38 33H9L0 40V3Q0 0 3 0ZM6 6V18H11L8 27H13L19 17V6Z M23 6V18H28L25 27H30L36 17V6Z"/></svg><svg class="a" style="left:484.8px;top:1376.6px" width="50.4" height="50.4" viewBox="0 0 24 24" ><path fill="#777" d="M10 4H3.300Q2 4 2 5.300V18.700Q2 20 3.300 20H20.700Q22 20 22 18.700V7.300Q22 6 20.700 6H12L10 4Z"/></svg><div class="t k" style="left:617px;top:1360.3px;letter-spacing:-1.07px;">PRJ-002</div><div class="t k" style="left:902.600px;top:1360.3px;letter-spacing:-2.51px;">FP</div><svg class="a" style="left:1206.8px;top:1364.8px" width="74.4" height="74.4" viewBox="0 0 24 24" ><path fill="#5ab377" d="M12 2C6.48 2 2 6.48 2 12s4.48 10 10 10 10-4.48 10-10S17.52 2 12 2zm-2 15l-5-5 1.41-1.41L10 14.17l7.59-7.59L19 8l-9 9z"/></svg><div class="t k" style="right:2167.6px;top:1360.3px;letter-spacing:-0.69px;">$ 34,325,000</div><div class="bar" style="top:1380.8px"><i style="width:91.86%"></i></div><div class="bt" style="top:1380.8px;letter-spacing:-0.34px;">01. Jan. 2024  -  27. Nov. 2025</div><div class="t k" style="left:3200px;top:1360.3px;letter-spacing:-1.9px;">BTRETHEWAY</div><div class="cb" style="top:1466.3px"></div><div class="g1" style="top:1444.0px"></div><div class="g2" style="top:1444.0px"><div class="a" style="left:0;top:3.3px;width:2072px;height:78px;overflow:hidden"><svg class="a" style="left:1786px;top:0" width="90" height="90" viewBox="0 0 90 90"><circle cx="45" cy="45" r="45" fill="#fff"/><g clip-path="url(#cp)"><rect x="0" y="0" width="90" height="90" fill="url(#bgM)"/><g filter="url(#bl)"><ellipse cx="44.700" cy="36" rx="34" ry="30.500" fill="url(#hrM)"/><path d="M11 40Q9 62 18 68L33 67Q30 50 32 36ZM78.500 40Q81 62 72 68L56 67Q59 50 57 36Z" fill="#823c1a"/><circle cx="18" cy="30" r="7" fill="#8f4520"/><circle cx="71" cy="30" r="7" fill="#8f4520"/><circle cx="31" cy="14" r="7" fill="#964b23"/><circle cx="58" cy="14" r="7" fill="#964b23"/><path d="M6 90Q10 72 32 67.500L44 70L56 67.500Q78 72 84 90Z" fill="#b9ad9a"/><path d="M38.500 50h11.500v17q-5.700 4.500-11.500 0Z" fill="#eac1a6"/><ellipse cx="44.300" cy="36.500" rx="13" ry="17" fill="url(#skM)"/><path d="M31 33Q31 17 44.300 17.500Q58 17 57.500 33Q54 24 44.300 24.500Q34 24 31 33Z" fill="#a5562a"/><path d="M39.500 46.500Q44.300 49.500 49 46.500Q44.300 45 39.500 46.500Z" fill="#d47f78"/><ellipse cx="38.600" cy="34.500" rx="2.700" ry="1.500" fill="#58748c"/><ellipse cx="50" cy="34.500" rx="2.700" ry="1.500" fill="#58748c"/><path d="M35 31q3.600-1.800 7.200 0M46.400 31q3.600-1.800 7.200 0" stroke="#8a4a28" stroke-width="1.300" fill="none"/></g></g></svg></div></div><svg class="a" style="left:358px;top:1466.3px" width="41" height="40" viewBox="0 0 41 40" ><path fill="#626262" fill-rule="evenodd" d="M3 0H38Q41 0 41 3V30Q41 33 38 33H9L0 40V3Q0 0 3 0ZM6 6V18H11L8 27H13L19 17V6Z M23 6V18H28L25 27H30L36 17V6Z"/></svg><svg class="a" style="left:484.8px;top:1460.6px" width="50.4" height="50.4" viewBox="0 0 24 24" ><path fill="#777" d="M10 4H3.300Q2 4 2 5.300V18.700Q2 20 3.300 20H20.700Q22 20 22 18.700V7.300Q22 6 20.700 6H12L10 4Z"/></svg><div class="t k" style="left:617px;top:1444.3px;letter-spacing:-1.07px;">PRJ-007</div><div class="t k" style="left:902.600px;top:1444.3px;letter-spacing:-1.33px;">T&amp;M</div><svg class="a" style="left:1201.3px;top:1443.3px" width="85.34" height="85.34" viewBox="0 0 24 24" ><path fill="#dc3832" d="M15.73 3H8.27L3 8.27v7.46L8.27 21h7.46L21 15.73V8.27L15.73 3zM17 15.74L15.74 17 12 13.26 8.26 17 7 15.74 10.74 12 7 8.26 8.26 7 12 10.74 15.74 7 17 8.26 13.26 12 17 15.74z"/></svg><div class="t k" style="right:2167.6px;top:1444.3px;letter-spacing:-0.69px;">$ 14,475,000</div><div class="bar" style="top:1464.8px"><i style="width:23.90%"></i></div><div class="bt" style="top:1464.8px;letter-spacing:-0.25px;">01. Jul. 2025  -  27. Jul. 2026</div><div class="t k" style="left:3200px;top:1444.3px;letter-spacing:-1.5px;">MDAPUZZO</div><div class="cb" style="top:1551.0px"></div><div class="g1" style="top:1528.0px;height:83.700px"></div><div class="g2" style="top:1528.0px;height:83.700px"><div class="a" style="left:0;top:4.0px;width:2072px;height:78px;overflow:hidden"><svg class="a" style="left:1786px;top:0" width="90" height="90" viewBox="0 0 90 90"><circle cx="45" cy="45" r="45" fill="#fff"/><g clip-path="url(#cp)"><rect x="0" y="0" width="90" height="90" fill="url(#bgM)"/><g filter="url(#bl)"><ellipse cx="44.700" cy="36" rx="34" ry="30.500" fill="url(#hrM)"/><path d="M11 40Q9 62 18 68L33 67Q30 50 32 36ZM78.500 40Q81 62 72 68L56 67Q59 50 57 36Z" fill="#823c1a"/><circle cx="18" cy="30" r="7" fill="#8f4520"/><circle cx="71" cy="30" r="7" fill="#8f4520"/><circle cx="31" cy="14" r="7" fill="#964b23"/><circle cx="58" cy="14" r="7" fill="#964b23"/><path d="M6 90Q10 72 32 67.500L44 70L56 67.500Q78 72 84 90Z" fill="#b9ad9a"/><path d="M38.500 50h11.500v17q-5.700 4.500-11.500 0Z" fill="#eac1a6"/><ellipse cx="44.300" cy="36.500" rx="13" ry="17" fill="url(#skM)"/><path d="M31 33Q31 17 44.300 17.500Q58 17 57.500 33Q54 24 44.300 24.500Q34 24 31 33Z" fill="#a5562a"/><path d="M39.500 46.500Q44.300 49.500 49 46.500Q44.300 45 39.500 46.500Z" fill="#d47f78"/><ellipse cx="38.600" cy="34.500" rx="2.700" ry="1.500" fill="#58748c"/><ellipse cx="50" cy="34.500" rx="2.700" ry="1.500" fill="#58748c"/><path d="M35 31q3.600-1.800 7.200 0M46.400 31q3.600-1.800 7.200 0" stroke="#8a4a28" stroke-width="1.300" fill="none"/></g></g></svg></div></div><svg class="a" style="left:358px;top:1551.0px" width="41" height="40" viewBox="0 0 41 40" ><path fill="#626262" fill-rule="evenodd" d="M3 0H38Q41 0 41 3V30Q41 33 38 33H9L0 40V3Q0 0 3 0ZM6 6V18H11L8 27H13L19 17V6Z M23 6V18H28L25 27H30L36 17V6Z"/></svg><svg class="a" style="left:484.8px;top:1545.3px" width="50.4" height="50.4" viewBox="0 0 24 24" ><path fill="#777" d="M10 4H3.300Q2 4 2 5.300V18.700Q2 20 3.300 20H20.700Q22 20 22 18.700V7.300Q22 6 20.700 6H12L10 4Z"/></svg><div class="t k" style="left:617px;top:1529.0px;letter-spacing:-1.63px;">US-CON-2003</div><div class="t k" style="left:902.600px;top:1529.0px;letter-spacing:-2.51px;">FP</div><svg class="a" style="left:1206.8px;top:1533.5px" width="74.4" height="74.4" viewBox="0 0 24 24" ><path fill="#5ab377" d="M12 2C6.48 2 2 6.48 2 12s4.48 10 10 10 10-4.48 10-10S17.52 2 12 2zm-2 15l-5-5 1.41-1.41L10 14.17l7.59-7.59L19 8l-9 9z"/></svg><div class="t k" style="right:2167.6px;top:1529.0px;letter-spacing:-0.69px;">$ 10,735,000</div><div class="t k" style="right:1841.3px;top:1529.0px;letter-spacing:-0.75px;">$ 9,000,000</div><div class="bar" style="top:1548.8px"><i style="width:43.86%"></i></div><div class="bt" style="top:1548.8px;letter-spacing:-0.32px;">01. Jan. 2024  -  07. Jan. 2028</div><div class="t k" style="left:3200px;top:1529.0px;letter-spacing:-1.5px;">MDAPUZZO</div><div class="grp" style="top:1615.0px"><i></i></div><svg class="a" style="left:289px;top:1643.5px" width="27" height="17" viewBox="0 0 27 17" ><path d="M2.2 2.2 L13.5 14.3 L24.8 2.2" fill="none" stroke="#626262" stroke-width="4.4" stroke-linejoin="miter"/></svg><div class="gt" style="top:1615.0px;letter-spacing:-0.28px;">Customer 3</div><div class="strip" style="top:1695.0px;height:84.5px"></div><div class="dot" style="top:1752.0px"><i></i></div><div class="cb" style="top:1718.1px"></div><div class="g1" style="top:1696.0px;height:83.700px"></div><div class="g2" style="top:1696.0px;height:83.700px"><div class="a" style="left:0;top:3.1px;width:2072px;height:78px;overflow:hidden"><svg class="a" style="left:1786px;top:0" width="90" height="90" viewBox="0 0 90 90"><circle cx="45" cy="45" r="45" fill="#fff"/><g clip-path="url(#cp)"><rect x="0" y="0" width="90" height="90" fill="url(#bgM)"/><g filter="url(#bl)"><ellipse cx="44.700" cy="36" rx="34" ry="30.500" fill="url(#hrM)"/><path d="M11 40Q9 62 18 68L33 67Q30 50 32 36ZM78.500 40Q81 62 72 68L56 67Q59 50 57 36Z" fill="#823c1a"/><circle cx="18" cy="30" r="7" fill="#8f4520"/><circle cx="71" cy="30" r="7" fill="#8f4520"/><circle cx="31" cy="14" r="7" fill="#964b23"/><circle cx="58" cy="14" r="7" fill="#964b23"/><path d="M6 90Q10 72 32 67.500L44 70L56 67.500Q78 72 84 90Z" fill="#b9ad9a"/><path d="M38.500 50h11.500v17q-5.700 4.500-11.500 0Z" fill="#eac1a6"/><ellipse cx="44.300" cy="36.500" rx="13" ry="17" fill="url(#skM)"/><path d="M31 33Q31 17 44.300 17.500Q58 17 57.500 33Q54 24 44.300 24.500Q34 24 31 33Z" fill="#a5562a"/><path d="M39.500 46.500Q44.300 49.500 49 46.500Q44.300 45 39.500 46.500Z" fill="#d47f78"/><ellipse cx="38.600" cy="34.500" rx="2.700" ry="1.500" fill="#58748c"/><ellipse cx="50" cy="34.500" rx="2.700" ry="1.500" fill="#58748c"/><path d="M35 31q3.600-1.800 7.200 0M46.400 31q3.600-1.800 7.200 0" stroke="#8a4a28" stroke-width="1.300" fill="none"/></g></g></svg></div></div><svg class="a" style="left:358px;top:1718.1px" width="41" height="40" viewBox="0 0 41 40" ><path fill="#626262" fill-rule="evenodd" d="M3 0H38Q41 0 41 3V30Q41 33 38 33H9L0 40V3Q0 0 3 0ZM6 6V18H11L8 27H13L19 17V6Z M23 6V18H28L25 27H30L36 17V6Z"/></svg><svg class="a" style="left:484.8px;top:1712.4px" width="50.4" height="50.4" viewBox="0 0 24 24" ><path fill="#777" d="M10 4H3.300Q2 4 2 5.300V18.700Q2 20 3.300 20H20.700Q22 20 22 18.700V7.300Q22 6 20.700 6H12L10 4Z"/></svg><div class="t k" style="left:617px;top:1696.1px;letter-spacing:-0.95px;">CAP-2001</div><div class="t k" style="left:902.600px;top:1696.1px;letter-spacing:-2.51px;">FP</div><svg class="a" style="left:1206.8px;top:1700.6px" width="74.4" height="74.4" viewBox="0 0 24 24" ><path fill="#5ab377" d="M12 2C6.48 2 2 6.48 2 12s4.48 10 10 10 10-4.48 10-10S17.52 2 12 2zm-2 15l-5-5 1.41-1.41L10 14.17l7.59-7.59L19 8l-9 9z"/></svg><div class="t k" style="right:2167.6px;top:1696.1px;letter-spacing:-0.69px;">$ 16,000,000</div><div class="t k" style="right:1841.3px;top:1696.1px;letter-spacing:-0.75px;">$ 5,453,727</div><div class="bar" style="top:1716.0px"><i style="width:37.86%"></i></div><div class="bt" style="top:1716.0px;letter-spacing:-0.32px;">01. Jan. 2024  -  04. Aug. 2028</div><div class="t k" style="left:3200px;top:1696.1px;letter-spacing:-1.5px;">MDAPUZZO</div><div class="grp" style="top:1783.0px"><i></i></div><svg class="a" style="left:289px;top:1811.5px" width="27" height="17" viewBox="0 0 27 17" ><path d="M2.2 2.2 L13.5 14.3 L24.8 2.2" fill="none" stroke="#626262" stroke-width="4.4" stroke-linejoin="miter"/></svg><div class="gt" style="top:1783.0px;letter-spacing:-0.28px;">Customer 4</div><div class="strip" style="top:1863.0px;height:168.5px"></div><div class="dot" style="top:2004.0px"><i></i></div><div class="cb" style="top:1885.2px"></div><div class="g1" style="top:1864.0px"></div><div class="g2" style="top:1864.0px"><div class="a" style="left:0;top:2.2px;width:2072px;height:78px;overflow:hidden"><svg class="a" style="left:1786px;top:0" width="90" height="90" viewBox="0 0 90 90"><circle cx="45" cy="45" r="45" fill="#fff"/><g clip-path="url(#cp)"><rect x="0" y="0" width="90" height="90" fill="url(#bgM)"/><g filter="url(#bl)"><ellipse cx="44.700" cy="36" rx="34" ry="30.500" fill="url(#hrM)"/><path d="M11 40Q9 62 18 68L33 67Q30 50 32 36ZM78.500 40Q81 62 72 68L56 67Q59 50 57 36Z" fill="#823c1a"/><circle cx="18" cy="30" r="7" fill="#8f4520"/><circle cx="71" cy="30" r="7" fill="#8f4520"/><circle cx="31" cy="14" r="7" fill="#964b23"/><circle cx="58" cy="14" r="7" fill="#964b23"/><path d="M6 90Q10 72 32 67.500L44 70L56 67.500Q78 72 84 90Z" fill="#b9ad9a"/><path d="M38.500 50h11.500v17q-5.700 4.500-11.500 0Z" fill="#eac1a6"/><ellipse cx="44.300" cy="36.500" rx="13" ry="17" fill="url(#skM)"/><path d="M31 33Q31 17 44.300 17.500Q58 17 57.500 33Q54 24 44.300 24.500Q34 24 31 33Z" fill="#a5562a"/><path d="M39.500 46.500Q44.300 49.500 49 46.500Q44.300 45 39.500 46.500Z" fill="#d47f78"/><ellipse cx="38.600" cy="34.500" rx="2.700" ry="1.500" fill="#58748c"/><ellipse cx="50" cy="34.500" rx="2.700" ry="1.500" fill="#58748c"/><path d="M35 31q3.600-1.800 7.200 0M46.400 31q3.600-1.800 7.200 0" stroke="#8a4a28" stroke-width="1.300" fill="none"/></g></g></svg></div></div><svg class="a" style="left:358px;top:1885.2px" width="41" height="40" viewBox="0 0 41 40" ><path fill="#626262" fill-rule="evenodd" d="M3 0H38Q41 0 41 3V30Q41 33 38 33H9L0 40V3Q0 0 3 0ZM6 6V18H11L8 27H13L19 17V6Z M23 6V18H28L25 27H30L36 17V6Z"/></svg><svg class="a" style="left:484.8px;top:1879.5px" width="50.4" height="50.4" viewBox="0 0 24 24" ><path fill="#777" d="M10 4H3.300Q2 4 2 5.300V18.700Q2 20 3.300 20H20.700Q22 20 22 18.700V7.300Q22 6 20.700 6H12L10 4Z"/></svg><div class="t k" style="left:617px;top:1863.2px;letter-spacing:-1.07px;">PRJ-004</div><div class="t k" style="left:902.600px;top:1863.2px;letter-spacing:-2.51px;">FP</div><svg class="a" style="left:1201.3px;top:1862.2px" width="85.34" height="85.34" viewBox="0 0 24 24" ><path fill="#dc3832" d="M15.73 3H8.27L3 8.27v7.46L8.27 21h7.46L21 15.73V8.27L15.73 3zM17 15.74L15.74 17 12 13.26 8.26 17 7 15.74 10.74 12 7 8.26 8.26 7 12 10.74 15.74 7 17 8.26 13.26 12 17 15.74z"/></svg><div class="t k" style="right:2167.6px;top:1863.2px;letter-spacing:-0.69px;">$ 14,300,000</div><div class="bar" style="top:1884.0px"><i style="width:90.95%"></i></div><div class="bt" style="top:1884.0px;letter-spacing:-0.37px;">01. Jan. 2025  -  28. Oct. 2025</div><div class="t k" style="left:3200px;top:1863.2px;letter-spacing:-1.5px;">MDAPUZZO</div><div class="cb" style="top:1971.0px"></div><div class="g1" style="top:1948.0px;height:83.700px"></div><div class="g2" style="top:1948.0px;height:83.700px"><div class="a" style="left:0;top:4.0px;width:2072px;height:78px;overflow:hidden"><svg class="a" style="left:1786px;top:0" width="90" height="90" viewBox="0 0 90 90"><circle cx="45" cy="45" r="45" fill="#fff"/><g clip-path="url(#cp)"><rect x="0" y="0" width="90" height="90" fill="url(#bgE)"/><g filter="url(#bl)"><path d="M6 90Q10 69 29 64L37 61.500Q44 69 51 61.500L59 64Q78 69 82 90Z" fill="#151515"/><path d="M35 50h18.500v12q-9 8-18.500 0Z" fill="#a9754e"/><path d="M22.500 30Q19 12 34 7.500Q50 2.500 60 9Q67 15 63.500 30Q60 22 44 22Q28 22 22.500 30Z" fill="#15100e"/><ellipse cx="43" cy="20" rx="19" ry="12" fill="#15100e"/><path d="M22.500 24Q21 36 27 38L29 26ZM63.500 24Q65 36 60 38L58 26Z" fill="#15100e"/><ellipse cx="44" cy="42" rx="16.500" ry="16.500" fill="url(#skE)"/><path d="M27.500 42Q28 58 44 59.500Q60 58 60.500 42Q58 51.500 51.500 51.500Q44 49.500 36.500 51.500Q30 51.500 27.500 42Z" fill="#2a1a12"/><path d="M38.500 53Q44 56.500 49.500 53Q44 52 38.500 53Z" fill="#cf8a80"/><path d="M27 31Q33 22 44 24.500Q56 22 61 31Q56 27.500 44 28.500Q32 27.500 27 31Z" fill="#15100e"/><ellipse cx="37.500" cy="37.500" rx="3" ry="1.400" fill="#24150e"/><ellipse cx="50.500" cy="37.500" rx="3" ry="1.400" fill="#24150e"/><path d="M33 33.800q4.500-2.200 8.500 0M46.500 33.800q4-2.200 8.500 0" stroke="#1b120d" stroke-width="1.800" fill="none"/></g></g></svg></div></div><svg class="a" style="left:358px;top:1971.0px" width="41" height="40" viewBox="0 0 41 40" ><path fill="#626262" fill-rule="evenodd" d="M3 0H38Q41 0 41 3V30Q41 33 38 33H9L0 40V3Q0 0 3 0ZM6 6V18H11L8 27H13L19 17V6Z M23 6V18H28L25 27H30L36 17V6Z"/></svg><svg class="a" style="left:484.8px;top:1965.3px" width="50.4" height="50.4" viewBox="0 0 24 24" ><path fill="#777" d="M10 4H3.300Q2 4 2 5.300V18.700Q2 20 3.300 20H20.700Q22 20 22 18.700V7.300Q22 6 20.700 6H12L10 4Z"/></svg><div class="t k" style="left:617px;top:1949.0px;letter-spacing:-1.07px;">PRJ-008</div><div class="t k" style="left:902.600px;top:1949.0px;letter-spacing:-1.02px;">FPM</div><svg class="a" style="left:1201.3px;top:1948.0px" width="85.34" height="85.34" viewBox="0 0 24 24" ><path fill="#dc3832" d="M15.73 3H8.27L3 8.27v7.46L8.27 21h7.46L21 15.73V8.27L15.73 3zM17 15.74L15.74 17 12 13.26 8.26 17 7 15.74 10.74 12 7 8.26 8.26 7 12 10.74 15.74 7 17 8.26 13.26 12 17 15.74z"/></svg><div class="t k" style="right:2167.6px;top:1949.0px;letter-spacing:-0.75px;">$ 1,010,000</div><div class="bar" style="top:1968.8px"><i style="width:86.88%"></i></div><div class="bt" style="top:1968.8px;letter-spacing:-0.3px;">01. Jan. 2024  -  02. Jan. 2026</div><div class="t k" style="left:3200px;top:1949.0px;letter-spacing:-3.0px;">ERIC</div><div class="sep" style="left:168px;top:687.0px;width:89px"></div><div class="sep" style="left:275px;top:687.0px;width:3391px"></div><div class="sep" style="left:168px;top:771.0px;width:89px"></div><div class="sep" style="left:275px;top:771.0px;width:3391px"></div><div class="sep" style="left:168px;top:855.0px;width:89px"></div><div class="sep" style="left:275px;top:855.0px;width:3391px"></div><div class="sep" style="left:168px;top:939.0px;width:89px"></div><div class="sep" style="left:275px;top:939.0px;width:3391px"></div><div class="sep" style="left:168px;top:1191.0px;width:89px"></div><div class="sep" style="left:275px;top:1191.0px;width:3391px"></div><div class="sep" style="left:168px;top:1275.0px;width:89px"></div><div class="sep" style="left:275px;top:1275.0px;width:3391px"></div><div class="sep" style="left:168px;top:1359.0px;width:89px"></div><div class="sep" style="left:275px;top:1359.0px;width:3391px"></div><div class="sep" style="left:168px;top:1443.0px;width:89px"></div><div class="sep" style="left:275px;top:1443.0px;width:3391px"></div><div class="sep" style="left:168px;top:1527.0px;width:89px"></div><div class="sep" style="left:275px;top:1527.0px;width:3391px"></div><div class="sep" style="left:168px;top:1947.0px;width:89px"></div><div class="sep" style="left:275px;top:1947.0px;width:3391px"></div><svg class="a" style="left:3720px;top:292px" width="54" height="54" viewBox="0 0 54 54" ><g fill="#787a9e"><rect x="9.500" y="0" width="5.500" height="29"/><rect x="0" y="36" width="23.600" height="5.800"/><rect x="9.500" y="41" width="5.500" height="13"/><rect x="39" y="0" width="5.500" height="12"/><rect x="30" y="12" width="24" height="5.800"/><rect x="39" y="24" width="5.500" height="30"/></g></svg><div class="a" style="left:3702px;top:402.500px;width:93px;height:3px;background:#e2e2e2"></div><svg class="a" style="left:3703px;top:449px" width="88" height="88" viewBox="0 0 24 24" ><path fill="#c1c1c1" d="M17 3H5c-1.11 0-2 .9-2 2v14c0 1.1.89 2 2 2h14c1.1 0 2-.9 2-2V7l-4-4zm-5 16c-1.66 0-3-1.34-3-3s1.34-3 3-3 3 1.34 3 3-1.34 3-3 3zm3-10H5V5h10v4z"/></svg><svg class="a" style="left:3711px;top:579px" width="72" height="72" viewBox="0 0 24 24" ><path fill="#787a9e" d="M21 5c-1.11-.35-2.33-.5-3.5-.5-1.95 0-4.05.4-5.5 1.5-1.45-1.1-3.55-1.5-5.5-1.5S2.45 4.9 1 6v14.65c0 .25.25.5.5.5.1 0 .15-.05.25-.05C3.1 20.45 5.05 20 6.5 20c1.95 0 4.05.4 5.5 1.5 1.35-.85 3.8-1.5 5.5-1.5 1.65 0 3.35.3 4.75 1.05.1.05.15.05.25.05.25 0 .5-.25.5-.5V6c-.6-.45-1.25-.75-2-1zm0 13.5c-1.1-.35-2.3-.5-3.5-.5-1.7 0-4.15.65-5.5 1.5V8c1.35-.85 3.8-1.5 5.5-1.5 1.2 0 2.4.15 3.5.5v11.5zM17.5 10.5c.88 0 1.73.09 2.5.26V9.24c-.79-.15-1.64-.24-2.5-.24-1.7 0-3.24.29-4.5.83v1.66c1.13-.64 2.7-.99 4.5-.99zM13 12.49v1.66c1.13-.64 2.7-.99 4.5-.99.88 0 1.73.09 2.5.26V11.900c-.79-.15-1.64-.24-2.5-.24-1.7 0-3.24.3-4.5.83zm4.5 1.84c-1.7 0-3.24.29-4.5.83v1.66c1.13-.64 2.7-.99 4.5-.99.88 0 1.73.09 2.5.26v-1.52c-.79-.16-1.64-.24-2.5-.24z"/></svg><svg class="a" style="left:3711px;top:700.5px" width="72" height="72" viewBox="0 0 24 24" ><path fill="#787a9e" d="M20 9V7c0-1.1-.9-2-2-2h-3c0-1.66-1.34-3-3-3S9 3.340 9 5H6c-1.1 0-2 .9-2 2v2c-1.66 0-3 1.340-3 3s1.340 3 3 3v4c0 1.100.900 2 2 2h12c1.100 0 2-.900 2-2v-4c1.660 0 3-1.340 3-3s-1.340-3-3-3zM7.500 11.500c0-.830.670-1.500 1.500-1.500s1.500.670 1.500 1.500S9.830 13 9 13s-1.500-.670-1.500-1.500zM16 17H8v-2h8v2zm-1-4c-.830 0-1.500-.670-1.500-1.500S14.170 10 15 10s1.500.670 1.500 1.500S15.830 13 15 13z"/></svg><svg class="a" style="left:3717px;top:822px" width="61" height="56" viewBox="0 0 61 56" ><rect x="3" y="3" width="55" height="42" rx="5" fill="none" stroke="#787a9e" stroke-width="6"/><rect x="19" y="47" width="23" height="9" fill="#787a9e"/><g fill="#787a9e"><rect x="12" y="16" width="26" height="4"/><rect x="38" y="12" width="4" height="12"/><rect x="42" y="16" width="7" height="4"/><rect x="12" y="28" width="5" height="4"/><rect x="17" y="24" width="4" height="12"/><rect x="21" y="28" width="28" height="4"/></g></svg><div class="a" style="left:3702px;top:937px;width:93px;height:3px;background:#e2e2e2"></div><svg class="a" style="left:3713px;top:986px" width="68" height="64" viewBox="0 0 68 64" ><rect x="39" y="8.300" width="27.300" height="47.200" fill="#787a9e"/><rect x="40.9" y="12.1" width="8.9" height="5.300" fill="#fff"/><rect x="51.9" y="12.1" width="10.6" height="5.300" fill="#fff"/><rect x="40.9" y="19.5" width="8.9" height="5.300" fill="#fff"/><rect x="51.9" y="19.5" width="10.6" height="5.300" fill="#fff"/><rect x="40.9" y="28" width="8.9" height="5.300" fill="#fff"/><rect x="51.9" y="28" width="10.6" height="5.300" fill="#fff"/><rect x="40.9" y="36.5" width="8.9" height="5.300" fill="#fff"/><rect x="51.9" y="36.5" width="10.6" height="5.300" fill="#fff"/><rect x="40.9" y="44.9" width="8.9" height="5.300" fill="#fff"/><rect x="51.9" y="44.9" width="10.6" height="5.300" fill="#fff"/><path d="M1.700 10L38.800 1.100V62.500L1.700 56.200Z" fill="#787a9e"/><text x="20.500" y="42.200" text-anchor="middle" font-family="Liberation Sans,sans-serif" font-weight="bold" font-size="29" fill="#fff" textLength="15" lengthAdjust="spacingAndGlyphs">X</text></svg><div class="badge" style="left:3705.2px;top:970.2px"></div><svg class="a" style="left:3714px;top:983.3px" width="18" height="11" viewBox="0 0 18 11" ><path d="M1.9 1.9 L9.0 8.6 L16.1 1.9" fill="none" stroke="#5a5a5a" stroke-width="3.8" stroke-linejoin="miter"/></svg><svg class="a" style="left:3713px;top:1086px" width="68" height="68" viewBox="0 0 68 68" ><path d="M4.850 24V58.500Q4.850 63.500 9.850 63.500H53.200" fill="none" stroke="#787a9e" stroke-width="6.300"/><rect x="14.400" y="1" width="51.900" height="52.500" rx="5.500" fill="#787a9e"/><text x="40.900" y="37" text-anchor="middle" font-family="Liberation Sans,sans-serif" font-weight="bold" font-size="26" fill="#fff" textLength="43" lengthAdjust="spacingAndGlyphs">PDF</text></svg><div class="badge" style="left:3705.2px;top:1072.2px"></div><svg class="a" style="left:3714px;top:1085.3px" width="18" height="11" viewBox="0 0 18 11" ><path d="M1.9 1.9 L9.0 8.6 L16.1 1.9" fill="none" stroke="#5a5a5a" stroke-width="3.8" stroke-linejoin="miter"/></svg><svg class="a" style="left:3711px;top:1185px" width="74" height="71" viewBox="0 0 74 71" ><path d="M43.900 15H71.200V48.100" fill="none" stroke="#787a9e" stroke-width="1.600"/><rect x="43.900" y="18.500" width="22.900" height="38.100" fill="#787a9e"/><circle cx="52.400" cy="29.500" r="6.400" fill="#fff"/><path d="M51.400 28.500V21.100A7.400 7.400 0 0 0 44 28.500Z" fill="#787a9e"/><path d="M51 29V22.500A6.500 6.500 0 0 0 44.500 29Z" fill="#fff" transform="translate(-1.200,-1.200)"/><rect x="43.900" y="43.900" width="15.900" height="2.600" fill="#fff"/><rect x="43.900" y="49.800" width="15.900" height="2.600" fill="#fff"/><path d="M0.100 11.100L41.800 1.100V69.700L0.100 63.400Z" fill="#787a9e"/><text x="21.400" y="47.700" text-anchor="middle" font-family="Liberation Sans,sans-serif" font-weight="bold" font-size="29" fill="#fff" textLength="14.500" lengthAdjust="spacingAndGlyphs">P</text></svg><div class="badge" style="left:3705.2px;top:1173.9px"></div><svg class="a" style="left:3714px;top:1187.0px" width="18" height="11" viewBox="0 0 18 11" ><path d="M1.9 1.9 L9.0 8.6 L16.1 1.9" fill="none" stroke="#5a5a5a" stroke-width="3.8" stroke-linejoin="miter"/></svg><svg class="a" style="left:3716px;top:1289px" width="62" height="69" viewBox="0 0 62 69" ><rect x="3" y="10" width="56" height="56" rx="6" fill="none" stroke="#787a9e" stroke-width="6"/><rect x="3" y="10" width="56" height="19" fill="#787a9e"/><rect x="44" y="0" width="7" height="14" fill="#787a9e"/><rect x="11" y="0" width="7" height="14" fill="#787a9e"/><rect x="15" y="33" width="7" height="6" fill="#787a9e"/><rect x="27.500" y="33" width="7" height="6" fill="#787a9e"/><rect x="40" y="33" width="7" height="6" fill="#787a9e"/></svg><div class="badge" style="left:3705.2px;top:1276.2px"></div><svg class="a" style="left:3714px;top:1289.3px" width="18" height="11" viewBox="0 0 18 11" ><path d="M1.9 1.9 L9.0 8.6 L16.1 1.9" fill="none" stroke="#5a5a5a" stroke-width="3.8" stroke-linejoin="miter"/></svg><svg class="a" style="left:3712px;top:1402px" width="70" height="48" viewBox="0 0 70 48" ><g fill="#787a9e"><circle cx="24.300" cy="12" r="11.600"/><circle cx="52" cy="15.500" r="9.800"/><path d="M0 48V42Q0 31 17 30.500H27Q34.500 31 32.500 37Q28 41 27.500 48Z"/><path d="M33 48Q34 42 38 38.500Q40.500 33 36.500 31Q44 30 52 30.500Q69.500 31.500 69.500 42V48Z"/></g></svg><svg class="a" style="left:3712px;top:1493px" width="70" height="70" viewBox="0 0 70 70" ><circle cx="35" cy="35" r="34.700" fill="#787a9e"/><text x="35" y="56" text-anchor="middle" font-family="Liberation Sans,sans-serif" font-size="63" fill="#fff" stroke="#fff" stroke-width="1.200">$</text></svg><svg class="a" style="left:3711px;top:1592.8px" width="72" height="72" viewBox="0 0 24 24" ><path fill="#787a9e" d="M16.54 11L13 7.46l1.41-1.41 2.12 2.12 4.24-4.24 1.41 1.41L16.54 11zM11 7H2v2h9V7zm10 6.41L19.59 12 17 14.59 14.41 12 13 13.41 15.59 16 13 18.59 14.41 20 17 17.41 19.59 20 21 18.590 18.410 16 21 13.410zM11 15H2v2h9v-2z"/></svg><svg class="a" style="left:3702.7px;top:1686.9px" width="88" height="88" viewBox="0 0 24 24" ><path fill="#787a9e" d="M16 17.01V10h-2v7.010h-3L15 21l4-3.990h-3zM9 3L5 6.990h3V14h2V6.990h3L9 3z"/></svg><div class="badge" style="left:3705.2px;top:1683.6000000000001px"></div><svg class="a" style="left:3714px;top:1696.7px" width="18" height="11" viewBox="0 0 18 11" ><path d="M1.9 1.9 L9.0 8.6 L16.1 1.9" fill="none" stroke="#5a5a5a" stroke-width="3.8" stroke-linejoin="miter"/></svg></body></html>
